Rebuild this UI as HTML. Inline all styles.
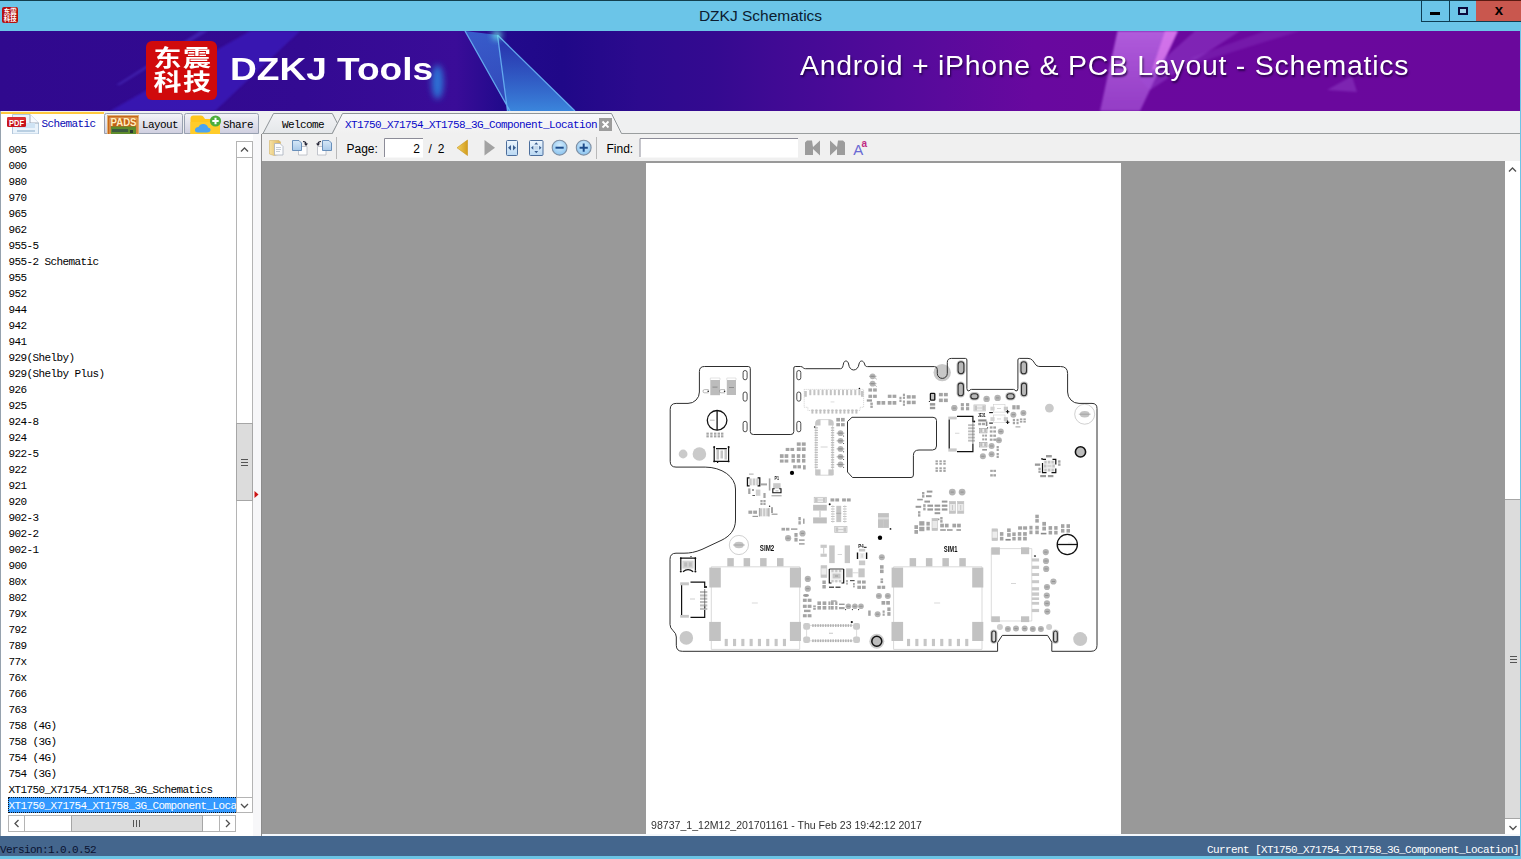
<!DOCTYPE html>
<html lang="en">
<head>
<meta charset="utf-8">
<title>DZKJ Schematics</title>
<style>
*{box-sizing:border-box;margin:0;padding:0}
html,body{width:1521px;height:859px;overflow:hidden;background:#6bc5e8}
body{position:relative;font-family:"Liberation Sans","Noto Sans CJK SC",sans-serif;font-size:13px;color:#000}
.abs{position:absolute}
.mono{font-family:"Liberation Mono","Noto Sans CJK SC",monospace;font-size:11px;letter-spacing:-0.6px;white-space:pre}
/* title bar */
#titlebar{left:0;top:0;width:1521px;height:31px;background:#6bc5e8;border-top:1px solid #123f4e}
#title{left:0;top:6.500px;width:1521px;text-align:center;font-size:15.500px;line-height:18px;color:#0c1c30}
#appicon{left:2px;top:7px;width:16px;height:16px;background:#b5100f;border-radius:2px;overflow:hidden}
#winbtns{left:1421px;top:0;width:100px;height:22px;border-left:1px solid #0d3c52;border-bottom:1px solid #0d3c52}
#btnmin{left:0;top:0;width:27px;height:21px}
#btnmax{left:27px;top:0;width:27px;height:21px;border-left:1px solid #0d3c52}
#btnclose{left:54px;top:0;width:46px;height:21px;background:#c9574e;border-top:1px solid #5a1a12}
/* banner */
#banner{left:0;top:31px;width:1520px;height:80px;overflow:hidden;background:linear-gradient(90deg,#30098e 0%,#2c0a8c 22%,#28088a 45%,#3f0a92 60%,#6a0a9c 75%,#6c089c 100%)}
#logo{left:146px;top:9.5px;width:71px;height:59px;background:#d00a0c;border-radius:6px}
#logo span{position:absolute;color:#fff;font-family:"Liberation Sans","Noto Sans CJK SC",sans-serif;font-weight:700;font-size:28px;line-height:28px;letter-spacing:1.5px;transform:scale(1,.8);transform-origin:0 0;white-space:nowrap}
#brand{left:229.500px;top:18px;font-size:32px;line-height:40px;font-weight:700;color:#fff;white-space:nowrap;transform:scale(1.158,1);transform-origin:0 0}
#slogan{left:800px;top:19px;font-size:27px;line-height:32px;color:#fff;white-space:nowrap;text-shadow:1px 2px 2px rgba(30,0,60,.8);letter-spacing:.7px;transform:scale(1.054,1);transform-origin:0 0}
/* tab strip */
#tabstrip{left:0;top:111px;width:1520px;height:23px;background:#eff0f1}
#tabline{left:262px;top:133px;width:1258px;height:1px;background:#9a9e9f}
.ltab{top:2px;height:20px;border:1px solid #9aa0b4;border-bottom:none;border-radius:3px 3px 0 0;background:linear-gradient(#f2f2f6,#d4d4e2)}
#tab1{left:1px;top:1px;width:103px;height:22px;background:#fff;border-top:2px solid #ffc83d}
/* left panel */
#left{left:0;top:134px;width:262px;height:702px;background:#fff;border-left:1px solid #96a2ae}
#splitter{left:253px;top:134px;width:8px;height:702px;background:#f7f7f9}
#lborder{left:261px;top:134px;width:1px;height:702px;background:#8c8c8c}
.row.sel{background:#3399ff;color:#fff;outline:1px dotted #111;outline-offset:-1px}
.row{position:absolute;left:8px;width:300px;height:16px;line-height:18px;padding-left:.5px;color:#000;overflow:hidden}
/* toolbar + viewer */
#toolbar{left:262px;top:134px;width:1258px;height:27px;background:#f0f0f0}
#viewer{left:262px;top:161px;width:1243px;height:673px;background:#999}
#page{left:384px;top:2px;width:475px;height:671px;background:#fff}
#vsb{left:1505px;top:161px;width:15px;height:673px;background:#fff}
#under{left:262px;top:834px;width:1258px;height:2px;background:#f4f8fc}
/* status */
#status{left:0;top:836px;width:1520px;height:20px;background:#44668d}
#bottom{left:0;top:856px;width:1521px;height:3px;background:#6cc4e4}
</style>
</head>
<body>
<!-- TITLE BAR -->
<div id="titlebar" class="abs"></div>
<div id="appicon" class="abs"><svg width="16" height="16" viewBox="0 0 16 16"><text x="1.800" y="7.400" font-family="Liberation Sans, Noto Sans CJK SC, sans-serif" font-weight="700" font-size="6.400" fill="#fff">东震</text><text x="1.800" y="13.800" font-family="Liberation Sans, Noto Sans CJK SC, sans-serif" font-weight="700" font-size="6.400" fill="#fff">科技</text></svg></div>
<div id="title" class="abs">DZKJ Schematics</div>
<div id="winbtns" class="abs">
  <div id="btnmin" class="abs"><div class="abs" style="left:8px;top:12px;width:10px;height:3px;background:#000"></div></div>
  <div id="btnmax" class="abs"><div class="abs" style="left:8px;top:7px;width:10px;height:8px;border:2px solid #0a0a3c;background:#9ed4ea"></div></div>
  <div id="btnclose" class="abs"><div class="abs" style="left:0;top:0;width:46px;text-align:center;font-weight:700;font-size:15px;line-height:18px;color:#000">x</div></div>
</div>
<!-- BANNER -->
<div id="banner" class="abs">
  <svg class="abs" style="left:0;top:0" width="1520" height="80" viewBox="0 31 1520 80">
    <defs>
      <linearGradient id="bg1" x1="0" y1="0" x2="1520" y2="0" gradientUnits="userSpaceOnUse">
        <stop offset="0" stop-color="#30098e"/><stop offset=".2" stop-color="#330a92"/><stop offset=".3" stop-color="#3a0c98"/>
        <stop offset=".33" stop-color="#220a8c"/><stop offset=".37" stop-color="#200888"/><stop offset=".42" stop-color="#2c0a8e"/>
        <stop offset=".47" stop-color="#340a90"/><stop offset=".51" stop-color="#400a94"/><stop offset=".56" stop-color="#4c0a98"/>
        <stop offset=".62" stop-color="#5a0a9c"/><stop offset=".68" stop-color="#68089f"/><stop offset=".74" stop-color="#6a089e"/><stop offset="1" stop-color="#6a089c"/>
      </linearGradient>
      <linearGradient id="sh1" x1="0" y1="31" x2="0" y2="111" gradientUnits="userSpaceOnUse"><stop offset="0" stop-color="#2a48c0" stop-opacity=".55"/><stop offset="1" stop-color="#3c8ce0" stop-opacity=".95"/></linearGradient>
      <linearGradient id="sh2" x1="0" y1="31" x2="0" y2="111" gradientUnits="userSpaceOnUse"><stop offset="0" stop-color="#3a70d8" stop-opacity=".8"/><stop offset="1" stop-color="#3a60cc" stop-opacity=".7"/></linearGradient>
      <linearGradient id="pk1" x1="0" y1="31" x2="0" y2="111" gradientUnits="userSpaceOnUse"><stop offset="0" stop-color="#c878f0" stop-opacity=".75"/><stop offset="1" stop-color="#b060e0" stop-opacity=".6"/></linearGradient>
      <filter id="bl3" x="-50%" y="-50%" width="200%" height="200%"><feGaussianBlur stdDeviation="3"/></filter>
      <filter id="bl1" x="-20%" y="-20%" width="140%" height="140%"><feGaussianBlur stdDeviation=".8"/></filter>
      <filter id="bl6" x="-50%" y="-50%" width="200%" height="200%"><feGaussianBlur stdDeviation="5"/></filter>
    </defs>
    <rect x="0" y="31" width="1520" height="80" fill="url(#bg1)"/>
    <!-- faint diagonal band on left -->
    <polygon points="250,31 300,31 215,111 110,111" fill="#4028d8" opacity=".45" filter="url(#bl1)"/>
    <polygon points="200,31 208,31 120,85 116,85" fill="#5a48e0" opacity=".35" filter="url(#bl1)"/>
    <!-- blue glow -->
    <ellipse cx="437.500" cy="82" rx="6" ry="17" fill="#2c84e0" opacity=".85" filter="url(#bl3)"/>
    <!-- crystal shard -->
    <polygon points="465,31 497.500,35 507.500,111 510,111" fill="url(#sh2)"/>
    <polygon points="497.500,35 575,111 507.500,111" fill="url(#sh1)"/>
    <path d="M465 31 L510 111 M497.500 35 L507.500 111 M497.500 35 L575 111" stroke="#68b4f4" stroke-width="1.300" fill="none" opacity=".9"/>
    <circle cx="497" cy="35" r="5" fill="#70f0e8" opacity=".8" filter="url(#bl3)"/>
    <!-- pink shards -->
    <polygon points="1117.500,31 1177.500,31 1140,111 1100,111" fill="url(#pk1)" filter="url(#bl1)"/>
    <polygon points="1165,31 1178,31 1160,70 1152,70" fill="#f088f8" opacity=".55" filter="url(#bl1)"/>
    <polygon points="1195,31 1240,31 1150,90 1140,80" fill="#a050d8" opacity=".4" filter="url(#bl1)"/>
    <polygon points="1265,31 1300,31 1200,62 1190,58" fill="#9040c8" opacity=".3" filter="url(#bl1)"/>
    <polygon points="1327,90 1352,76 1357,92" fill="#9a50d0" opacity=".4" filter="url(#bl1)"/>
  </svg>
  <div id="logo" class="abs"><span style="left:7.500px;top:7.500px">东震</span><span style="left:7.500px;top:31px">科技</span></div>
  <div id="brand" class="abs">DZKJ Tools</div>
  <div id="slogan" class="abs">Android + iPhone &amp; PCB Layout - Schematics</div>
</div>
<!-- TAB STRIP -->
<div id="tabstrip" class="abs"></div>
<div id="tabline" class="abs"></div>
<div class="abs" style="left:0;top:111px;width:1px;height:725px;background:#96a2ae"></div>
<svg class="abs" style="left:0;top:111px" width="1520" height="24" viewBox="0 111 1520 24">
  <defs>
    <linearGradient id="gtab" x1="0" y1="0" x2="0" y2="1"><stop offset="0" stop-color="#f4f4f8"/><stop offset="1" stop-color="#cfcfe0"/></linearGradient>
    <linearGradient id="gdoc" x1="0" y1="0" x2="0" y2="1"><stop offset="0" stop-color="#f2f3f5"/><stop offset="1" stop-color="#e4e7ea"/></linearGradient>
    <linearGradient id="gdoca" x1="0" y1="0" x2="0" y2="1"><stop offset="0" stop-color="#f8f8fc"/><stop offset="1" stop-color="#f0f0f0"/></linearGradient>
  </defs>
  <!-- active left tab -->
  <rect x="1" y="112" width="103" height="23" fill="#fff"/>
  <rect x="1" y="112" width="103" height="2" fill="#ffc83d"/>
  <!-- Layout / Share tabs -->
  <path d="M104.5 133.5 V115.5 Q104.5 113.5 106.5 113.5 H180.5 Q182.5 113.5 182.5 115.5 V133.5 Z" fill="url(#gtab)" stroke="#98a0b0"/>
  <path d="M184.5 133.5 V115.5 Q184.5 113.5 186.5 113.5 H256.5 Q258.5 113.5 258.5 115.5 V133.5 Z" fill="url(#gtab)" stroke="#98a0b0"/>
  <!-- Welcome doc tab -->
  <path d="M263 133.5 L273.5 113.5 H332.3 L337.5 123.5 L332.3 133.5 Z" fill="url(#gdoc)" stroke="#8f9599"/>
  <!-- active doc tab -->
  <path d="M332.3 134 L342.5 113.5 H611.5 L621.5 133.5 H1520 V135 H332 Z" fill="#f0f0f0" stroke="none"/>
  <path d="M332.3 133.5 L342.5 113.5 H611.5 L621.5 133.5" fill="url(#gdoca)" stroke="#8f9599"/>
  <path d="M621.5 133.5 H1520" stroke="#9a9e9f" fill="none"/>
  <path d="M262 133.5 H332.3" stroke="#9a9e9f" fill="none"/>
  <!-- close button -->
  <rect x="599" y="118" width="13" height="13" fill="#9c9c9c"/>
  <path d="M602.5 121.5 L608.5 127.5 M608.5 121.5 L602.5 127.5" stroke="#fff" stroke-width="1.8"/>
  <!-- PDF icon -->
  <g>
    <path d="M12.5 114.5 H30 L38.5 123 V134 H12.5 Z" fill="#eaf3fb" stroke="#b4c8dc"/>
    <path d="M30 114.5 V123 H38.5" fill="#f8fbff" stroke="#8d9aa8" stroke-width=".8"/>
    <rect x="17" y="123" width="18" height="5" fill="#cfe3f4"/>
    <rect x="17" y="130" width="18" height="2" fill="#b9cfe2"/>
    <rect x="7" y="117" width="19" height="10" rx="1.5" fill="#c8141c"/>
    <rect x="7" y="117" width="19" height="4" rx="1.5" fill="#e0363c" opacity=".7"/>
    <text x="16.5" y="125.6" text-anchor="middle" font-family="Liberation Sans, sans-serif" font-weight="700" font-size="8.5" fill="#fff" textLength="15" lengthAdjust="spacingAndGlyphs">PDF</text>
  </g>
  <!-- PADS icon -->
  <g>
    <rect x="107.5" y="115.5" width="31" height="19" fill="#c7661c" stroke="#e0b070"/>
    <rect x="110" y="118" width="27" height="16" fill="#c25e14" stroke="#f0d090" stroke-width=".7"/>
    <rect x="111" y="126.500" width="25" height="8" fill="#5e8c2c"/>
    <rect x="112" y="129" width="16" height="3" fill="#3c5a40"/>
    <rect x="130" y="130" width="3" height="3" fill="#2c3c30"/>
    <text x="123.500" y="125.800" text-anchor="middle" font-family="Liberation Sans, sans-serif" font-weight="700" font-size="11.500" fill="#ffeec0" textLength="26" lengthAdjust="spacingAndGlyphs">PADS</text>
  </g>
  <!-- Share icon -->
  <g>
    <path d="M190.500 134 V118.500 Q190.500 115.500 193.500 115.500 H201 Q203 115.500 204 117.500 L205 119 H217 Q220 119 220 122 V134 Z" fill="#ffc61c"/>
    <path d="M190.500 134 V122 H220 V134 Z" fill="#ffcc2a"/>
    <path d="M198 132.500 Q194.500 132.500 195 129.500 Q195.500 127 198.500 127 Q200 123.500 204 124 Q207.500 124.500 208 127.500 Q211 128 210.500 130.500 Q210 132.500 207 132.500 Z" fill="#4aa4f2"/>
    <circle cx="215.500" cy="121" r="5.600" fill="#4cae3c"/>
    <path d="M215.500 117.800 V124.200 M212.300 121 H218.700" stroke="#fff" stroke-width="2"/>
  </g>
</svg>
<div class="abs mono" style="left:41.500px;top:116px;line-height:16px;color:#0808b4">Schematic</div>
<div class="abs mono" style="left:142px;top:117px;line-height:16px;color:#000">Layout</div>
<div class="abs mono" style="left:223px;top:117px;line-height:16px;color:#000">Share</div>
<div class="abs mono" style="left:282px;top:117px;line-height:16px;color:#000">Welcome</div>
<div class="abs mono" style="left:345px;top:117px;line-height:16px;color:#0808c8">XT1750_X71754_XT1758_3G_Component_Location</div>

<!-- LEFT PANEL -->
<div id="left" class="abs"></div>
<div id="splitter" class="abs"></div>
<div id="lborder" class="abs"></div>
<div id="list" class="abs mono" style="left:0;top:141px;width:236px;height:672px;overflow:hidden">
<div class="row" style="top:0px">005</div>
<div class="row" style="top:16px">000</div>
<div class="row" style="top:32px">980</div>
<div class="row" style="top:48px">970</div>
<div class="row" style="top:64px">965</div>
<div class="row" style="top:80px">962</div>
<div class="row" style="top:96px">955-5</div>
<div class="row" style="top:112px">955-2 Schematic</div>
<div class="row" style="top:128px">955</div>
<div class="row" style="top:144px">952</div>
<div class="row" style="top:160px">944</div>
<div class="row" style="top:176px">942</div>
<div class="row" style="top:192px">941</div>
<div class="row" style="top:208px">929(Shelby)</div>
<div class="row" style="top:224px">929(Shelby Plus)</div>
<div class="row" style="top:240px">926</div>
<div class="row" style="top:256px">925</div>
<div class="row" style="top:272px">924-8</div>
<div class="row" style="top:288px">924</div>
<div class="row" style="top:304px">922-5</div>
<div class="row" style="top:320px">922</div>
<div class="row" style="top:336px">921</div>
<div class="row" style="top:352px">920</div>
<div class="row" style="top:368px">902-3</div>
<div class="row" style="top:384px">902-2</div>
<div class="row" style="top:400px">902-1</div>
<div class="row" style="top:416px">900</div>
<div class="row" style="top:432px">80x</div>
<div class="row" style="top:448px">802</div>
<div class="row" style="top:464px">79x</div>
<div class="row" style="top:480px">792</div>
<div class="row" style="top:496px">789</div>
<div class="row" style="top:512px">77x</div>
<div class="row" style="top:528px">76x</div>
<div class="row" style="top:544px">766</div>
<div class="row" style="top:560px">763</div>
<div class="row" style="top:576px">758 (4G)</div>
<div class="row" style="top:592px">758 (3G)</div>
<div class="row" style="top:608px">754 (4G)</div>
<div class="row" style="top:624px">754 (3G)</div>
<div class="row" style="top:640px">XT1750_X71754_XT1758_3G_Schematics</div>
<div class="row sel" style="top:656px">XT1750_X71754_XT1758_3G_Component_Location</div>
</div>
<!-- left vertical scrollbar -->
<div class="abs" style="left:236px;top:141px;width:17px;height:672px;background:#fff;border:1px solid #b4b4b4"></div>
<div class="abs" style="left:236px;top:157px;width:17px;height:1px;background:#b4b4b4"></div>
<div class="abs" style="left:236px;top:797px;width:17px;height:1px;background:#b4b4b4"></div>
<svg class="abs" style="left:236px;top:141px" width="17" height="17" viewBox="0 0 17 17"><path d="M5 10.5 L8.5 7 L12 10.5" fill="none" stroke="#505050" stroke-width="1.3"/></svg>
<svg class="abs" style="left:236px;top:797px" width="17" height="17" viewBox="0 0 17 17"><path d="M5 7 L8.5 10.5 L12 7" fill="none" stroke="#505050" stroke-width="1.3"/></svg>
<div class="abs" style="left:236px;top:423px;width:17px;height:78px;background:#dcdcdc;border:1px solid #a6a6a6"></div>
<div class="abs" style="left:241px;top:459px;width:7px;height:1px;background:#555;box-shadow:0 3px 0 #555,0 6px 0 #555"></div>
<!-- splitter arrow -->
<svg class="abs" style="left:253px;top:490px" width="8" height="9" viewBox="0 0 8 9"><path d="M1.5 1 L5.5 4.5 L1.5 8 Z" fill="#cc1414"/></svg>
<!-- left horizontal scrollbar -->
<div class="abs" style="left:8px;top:815px;width:228px;height:17px;background:#fff;border:1px solid #b4b4b4"></div>
<div class="abs" style="left:24px;top:815px;width:1px;height:17px;background:#b4b4b4"></div>
<div class="abs" style="left:219px;top:815px;width:1px;height:17px;background:#b4b4b4"></div>
<svg class="abs" style="left:8px;top:815px" width="17" height="17" viewBox="0 0 17 17"><path d="M10.5 5 L7 8.5 L10.5 12" fill="none" stroke="#505050" stroke-width="1.3"/></svg>
<svg class="abs" style="left:219px;top:815px" width="17" height="17" viewBox="0 0 17 17"><path d="M7 5 L10.5 8.5 L7 12" fill="none" stroke="#505050" stroke-width="1.3"/></svg>
<div class="abs" style="left:71px;top:815px;width:132px;height:17px;background:#dcdcdc;border:1px solid #a6a6a6"></div>
<div class="abs" style="left:133px;top:820px;width:1px;height:7px;background:#555;box-shadow:3px 0 0 #555,6px 0 0 #555"></div>

<!-- TOOLBAR -->
<div id="toolbar" class="abs"></div>
<svg class="abs" style="left:262px;top:134px" width="1258" height="27" viewBox="262 134 1258 27">
  <defs>
    <linearGradient id="gfold" x1="0" y1="0" x2="1" y2="0"><stop offset="0" stop-color="#f6e2a4"/><stop offset="1" stop-color="#dcb45c"/></linearGradient>
    <linearGradient id="gblue" x1="0" y1="0" x2="0" y2="1"><stop offset="0" stop-color="#eef6fd"/><stop offset="1" stop-color="#b9d8f3"/></linearGradient>
    <linearGradient id="gbpage" x1="0" y1="0" x2="0" y2="1"><stop offset="0" stop-color="#d6e8f8"/><stop offset="1" stop-color="#a9c9e8"/></linearGradient>
    <linearGradient id="ggold" x1="0" y1="0" x2="1" y2="0"><stop offset="0" stop-color="#f2d060"/><stop offset="1" stop-color="#d29c1c"/></linearGradient>
    <radialGradient id="gcirc" cx=".5" cy=".35" r=".7"><stop offset="0" stop-color="#d4ecfc"/><stop offset="1" stop-color="#84c0ee"/></radialGradient>
  </defs>
  <!-- icon 1: folder + doc -->
  <path d="M269.500 140.500 H279 L280.500 142 V154 L274 155.500 L269.500 154 Z" fill="url(#gfold)" stroke="#d4b468" stroke-width=".6"/>
  <path d="M274.500 143.500 H280 L283 146.500 V155 H274.500 Z" fill="#fbfcfe" stroke="#a8b0bc" stroke-width=".8"/>
  <path d="M276 147.500 H281 M276 149.500 H281 M276 151.500 H280" stroke="#b8c0cc" stroke-width=".8"/>
  <!-- icon 2 -->
  <path d="M299.500 146.500 H307 V155 H298.500 V151" fill="#fdfdfe" stroke="#b4b8c0" stroke-width=".8"/>
  <path d="M292.500 140.500 H299 L301.500 143 V150.500 H292.500 Z" fill="url(#gbpage)" stroke="#5c86b4" stroke-width=".9"/>
  <path d="M303 141.500 Q306 141.500 306 144" fill="none" stroke="#223" stroke-width="1.2"/>
  <path d="M304 143.500 H308 L306 146 Z" fill="#223"/>
  <!-- icon 3 -->
  <path d="M324.500 146.500 H317.500 V155 H326 V151" fill="#fdfdfe" stroke="#b4b8c0" stroke-width=".8"/>
  <path d="M322.500 140.500 H329 L331.500 143 V150.500 H322.500 Z" fill="url(#gbpage)" stroke="#5c86b4" stroke-width=".9"/>
  <path d="M321 141.500 Q318 141.500 318 144" fill="none" stroke="#223" stroke-width="1.2"/>
  <path d="M316 143.500 H320 L318 146 Z" fill="#223"/>
  <!-- separator -->
  <path d="M336.500 137 V159" stroke="#b9b9b9"/>
  <!-- page box -->
  <rect x="384" y="138" width="39" height="19.500" fill="#fff"/>
  <path d="M384.500 157 V138.500 H423" fill="none" stroke="#8c8c98"/>
  <!-- prev (gold) / next (gray) -->
  <path d="M467.500 140 V155.500 L457 147.750 Z" fill="url(#ggold)" stroke="#c8961c" stroke-width=".6"/>
  <path d="M484.500 140 V155.500 L495 147.750 Z" fill="#a2a2a2"/>
  <!-- fit width -->
  <rect x="506.500" y="140.500" width="11" height="15" rx="1" fill="url(#gblue)" stroke="#4c6e9c"/>
  <path d="M508 147.750 L511 145 V150.500 Z M516 147.750 L513 145 V150.500 Z" fill="#3a5e90"/>
  <!-- fit page -->
  <rect x="529.500" y="140.500" width="13.500" height="15" rx="1" fill="url(#gblue)" stroke="#4c6e9c"/>
  <path d="M531 147.750 L533.300 145.800 V149.700 Z M541.500 147.750 L539.200 145.800 V149.700 Z M536.250 142.300 L538.200 144.600 H534.300 Z M536.250 153.200 L538.200 150.900 H534.300 Z" fill="#3a5e90"/>
  <rect x="534.500" y="146" width="3.500" height="3.500" fill="#c6d8ea"/>
  <!-- zoom out / in -->
  <circle cx="559.600" cy="147.700" r="7.400" fill="url(#gcirc)" stroke="#7f90a4" stroke-width="1.100"/>
  <path d="M555.500 147.700 H563.700" stroke="#1c4c8c" stroke-width="2"/>
  <circle cx="583.700" cy="147.700" r="7.400" fill="url(#gcirc)" stroke="#7f90a4" stroke-width="1.100"/>
  <path d="M579.600 147.700 H587.800 M583.700 143.600 V151.800" stroke="#1c4c8c" stroke-width="2"/>
  <!-- separator -->
  <path d="M596.500 137 V159" stroke="#b9b9b9"/>
  <!-- find box -->
  <rect x="639.500" y="138" width="158.500" height="19.500" fill="#fff"/>
  <path d="M640 157 V138.500 H798" fill="none" stroke="#8c8c98"/>
  <!-- find prev/next -->
  <path d="M805 142.500 L807 140.500 H812 L813 147 L820 140.500 V155.500 L813 149 V155 H805 Z" fill="#9c9c9c"/>
  <path d="M845 142.500 L843 140.500 H838 L837 147 L830 140.500 V155.500 L837 149 V155 H845 Z" fill="#9c9c9c"/>
  <!-- Aa -->
  <text x="853.300" y="155" font-family="Liberation Sans, sans-serif" font-size="15" fill="#6a6ad4">A</text>
  <text x="861.500" y="147" font-family="Liberation Sans, sans-serif" font-size="10" font-weight="700" fill="#c02c84">a</text>
</svg>
<div class="abs" style="left:346.500px;top:141px;font-size:12px;line-height:16px">Page:</div>
<div class="abs" style="left:413.300px;top:141px;font-size:12px;line-height:16px">2</div>
<div class="abs" style="left:428.500px;top:141px;font-size:12px;line-height:16px;word-spacing:2.500px">/ 2</div>
<div class="abs" style="left:606.500px;top:141px;font-size:12px;line-height:16px">Find:</div>

<!-- VIEWER -->
<div id="viewer" class="abs">
  <div id="page" class="abs">
<!--PCB-START-->
<svg class="abs" style="left:0;top:0;filter:blur(.35px)" width="475" height="671" viewBox="646 163 475 671">
<circle cx="942.2" cy="372.6" r="8.7" fill="#c8c8c8"/>
<circle cx="683.1" cy="454" r="4.4" fill="#cacaca"/>
<circle cx="699.4" cy="454" r="6.8" fill="#cacaca"/>
<circle cx="686.3" cy="637.9" r="6.8" fill="#c8c8c8"/>
<circle cx="1080.2" cy="639.1" r="7" fill="#c8c8c8"/>
<circle cx="1049.4" cy="408.1" r="4.4" fill="#cacaca"/>
<rect x="743.1" y="370.5" width="4" height="9.3" rx="2" fill="none" stroke="#2e2e2e" stroke-width="0.85"/>
<rect x="743.1" y="392" width="4" height="9.2" rx="2" fill="none" stroke="#2e2e2e" stroke-width="0.85"/>
<rect x="743.1" y="421.3" width="4" height="10.5" rx="2" fill="none" stroke="#2e2e2e" stroke-width="0.85"/>
<rect x="796.8" y="370.5" width="4" height="9.3" rx="2" fill="none" stroke="#2e2e2e" stroke-width="0.85"/>
<rect x="796.8" y="392" width="4" height="9.2" rx="2" fill="none" stroke="#2e2e2e" stroke-width="0.85"/>
<rect x="796.8" y="421.3" width="4" height="10.5" rx="2" fill="none" stroke="#2e2e2e" stroke-width="0.85"/>
<rect x="710.3" y="380" width="9.7" height="15.2" fill="#bcbcbc"/>
<rect x="726.8" y="380" width="9.2" height="15" fill="#bcbcbc"/>
<path d="M710.3 380V378H720V380 M726.8 380V378H736V380" fill="none" stroke="#d0d0d0" stroke-width=".6"/>
<rect x="712.5" y="386.6" width="5" height="1" fill="#8e8e8e"/>
<rect x="729" y="387" width="5" height="1" fill="#8e8e8e"/>
<path d="M708.6 389.6H704.5Q703 389.6 703 391.2Q703 392.8 704.5 392.8H708.6 M725 389.6H721Q719.5 389.6 719.5 391.2Q719.5 392.8 721 392.8H725" fill="none" stroke="#8a8a8a" stroke-width=".6"/>
<circle cx="708.2" cy="391.2" r="0.8" fill="#111"/>
<circle cx="724.6" cy="391.2" r="0.8" fill="#111"/>
<circle cx="717.1" cy="420.3" r="9.8" fill="#fff" stroke="#111" stroke-width="1.3"/>
<path d="M717.1 410.5V430.1" stroke="#111" stroke-width="1.3"/>
<rect x="709.8" y="419.7" width="4.8" height="1" fill="#bbb"/>
<rect x="706.4" y="432.6" width="2.4" height="2.1" fill="#a4a4a4"/>
<rect x="706.4" y="435.3" width="2.4" height="2.1" fill="#a4a4a4"/>
<rect x="710.2" y="432.6" width="2.4" height="2.1" fill="#a4a4a4"/>
<rect x="710.2" y="435.3" width="2.4" height="2.1" fill="#a4a4a4"/>
<rect x="714" y="432.6" width="2.4" height="2.1" fill="#a4a4a4"/>
<rect x="714" y="435.3" width="2.4" height="2.1" fill="#a4a4a4"/>
<rect x="717.6" y="432.6" width="2.4" height="2.1" fill="#a4a4a4"/>
<rect x="717.6" y="435.3" width="2.4" height="2.1" fill="#a4a4a4"/>
<rect x="721" y="432.6" width="2.4" height="2.1" fill="#a4a4a4"/>
<rect x="721" y="435.3" width="2.4" height="2.1" fill="#a4a4a4"/>
<rect x="716.5" y="449.5" width="2.5" height="10" fill="#c4c4c4"/>
<rect x="720.5" y="450.5" width="2.5" height="8" fill="#c4c4c4"/>
<rect x="724.5" y="449.5" width="2.5" height="10" fill="#c4c4c4"/>
<path d="M714.2 447V461.4H728.6V447 M716 448.6H726.8" fill="none" stroke="#111" stroke-width="1.2"/>
<circle cx="714.2" cy="447" r="1" fill="#111"/>
<circle cx="728.6" cy="447" r="1" fill="#111"/>
<circle cx="714.2" cy="461.4" r="0.9" fill="#111"/>
<circle cx="728.6" cy="461.4" r="0.9" fill="#111"/>
<circle cx="717.6" cy="462.4" r="0.7" fill="#111"/>
<rect x="796.8" y="442.4" width="3.9" height="3.4" fill="#a4a4a4"/>
<rect x="801.8" y="442.4" width="3.9" height="3.4" fill="#a4a4a4"/>
<rect x="785.7" y="447.9" width="3.7" height="3.1" fill="#a4a4a4"/>
<rect x="790.4" y="447.9" width="3.7" height="3.1" fill="#a4a4a4"/>
<rect x="796.8" y="447.4" width="3.9" height="3.6" fill="#a4a4a4"/>
<rect x="801.8" y="447.4" width="3.9" height="3.6" fill="#a4a4a4"/>
<rect x="779.9" y="454.2" width="3.7" height="3.7" fill="#a4a4a4"/>
<rect x="784.6" y="454.2" width="3.7" height="3.7" fill="#a4a4a4"/>
<rect x="779.9" y="459.5" width="3.7" height="3.1" fill="#a4a4a4"/>
<rect x="784.6" y="459.5" width="3.7" height="3.1" fill="#a4a4a4"/>
<rect x="791.5" y="454.2" width="3.4" height="3.7" fill="#a4a4a4"/>
<rect x="791.5" y="458.9" width="3.4" height="3.7" fill="#a4a4a4"/>
<rect x="796.8" y="454.2" width="3.4" height="3.7" fill="#a4a4a4"/>
<rect x="796.8" y="458.9" width="3.4" height="3.7" fill="#a4a4a4"/>
<rect x="802" y="454.2" width="3.4" height="3.7" fill="#a4a4a4"/>
<rect x="802" y="458.9" width="3.4" height="3.7" fill="#a4a4a4"/>
<rect x="793.1" y="465.2" width="3.5" height="3.2" fill="#a4a4a4"/>
<rect x="797.5" y="465.2" width="3.5" height="3.2" fill="#a4a4a4"/>
<rect x="803" y="465.2" width="2.7" height="4.3" fill="#a4a4a4"/>
<circle cx="792" cy="472.9" r="2.1" fill="#000"/>
<rect x="747.8" y="478.4" width="11.8" height="7" fill="#ececec"/>
<rect x="749.6" y="478.6" width="2" height="6.6" fill="#c9c9c9"/>
<rect x="753" y="478.6" width="2" height="6.6" fill="#c9c9c9"/>
<rect x="756.4" y="478.6" width="2" height="6.6" fill="#c9c9c9"/>
<path d="M749.6 477.9H747.4V485.8H749.6 M757.6 477.9H759.8V485.8H757.6" fill="none" stroke="#111" stroke-width="1.2"/>
<rect x="749" y="473.6" width="4.6" height="1" fill="#aaa"/>
<rect x="760.6" y="483.4" width="6.4" height="2" fill="#a4a4a4"/>
<rect x="768.8" y="478.4" width="1.6" height="12.1" fill="#a4a4a4"/>
<rect x="748.2" y="488.4" width="2.2" height="5.6" fill="#a4a4a4"/>
<rect x="755.8" y="489.6" width="4.6" height="6.2" fill="#cfcfcf"/>
<circle cx="753" cy="490" r="0.8" fill="#222"/>
<rect x="752.4" y="495" width="2.6" height="1" fill="#555"/>
<rect x="773.2" y="483.2" width="7.4" height="5.4" fill="#c9c9c9"/>
<path d="M774.6 488.8H772.8V492.8H781V488.8H779.2" fill="none" stroke="#111" stroke-width="1.1"/>
<rect x="775.5" y="490" width="3" height="1.6" fill="#cfcfcf"/>
<rect x="771.5" y="495" width="10.1" height="1.4" fill="#b5b5b5"/>
<rect x="763.4" y="493" width="2.2" height="5" fill="#a4a4a4"/>
<rect x="760.4" y="500" width="2.2" height="2.2" fill="#a4a4a4"/>
<rect x="760.4" y="502.8" width="2.2" height="2.2" fill="#a4a4a4"/>
<rect x="763.4" y="500" width="2.2" height="2.2" fill="#a4a4a4"/>
<rect x="763.4" y="502.8" width="2.2" height="2.2" fill="#a4a4a4"/>
<rect x="748.4" y="510.6" width="3.8" height="3.2" fill="#a4a4a4"/>
<rect x="753.2" y="510.6" width="3.8" height="3.2" fill="#a4a4a4"/>
<rect x="752.5" y="515.8" width="5.5" height="1.2" fill="#999"/>
<rect x="759.4" y="508" width="9.6" height="8.5" fill="#ededed"/>
<rect x="760" y="508.4" width="2" height="7.8" fill="#c9c9c9"/>
<rect x="763.2" y="508.4" width="2" height="7.8" fill="#c9c9c9"/>
<rect x="766.4" y="508.4" width="2" height="7.8" fill="#c9c9c9"/>
<path d="M759.4 508V516.5 M769 508V516.5" stroke="#777" stroke-width=".7"/>
<rect x="771" y="507.2" width="2" height="5.8" fill="#a4a4a4"/>
<rect x="771.6" y="513.6" width="5.9" height="1.2" fill="#999"/>
<circle cx="769.6" cy="506.2" r="0.7" fill="#222"/>
<rect x="798.4" y="517" width="2.4" height="3.3" fill="#a4a4a4"/>
<rect x="798.4" y="521.2" width="2.4" height="3.3" fill="#a4a4a4"/>
<rect x="803" y="518.6" width="1.6" height="5.2" fill="#a4a4a4"/>
<rect x="781.5" y="527.8" width="3.5" height="2.8" fill="#a4a4a4"/>
<rect x="785.9" y="527.8" width="3.5" height="2.8" fill="#a4a4a4"/>
<rect x="791" y="528.4" width="6.4" height="1.4" fill="#999"/>
<circle cx="802.5" cy="533.4" r="3.1" fill="#b4b4b4"/>
<path d="M800.9 533.4H804.1" stroke="#8a8a8a" stroke-width=".8"/>
<circle cx="788.1" cy="538.2" r="3.1" fill="#b4b4b4"/>
<path d="M786.5 538.2H789.7" stroke="#8a8a8a" stroke-width=".8"/>
<rect x="794.4" y="533" width="3.2" height="3.8" fill="#a4a4a4"/>
<rect x="794.4" y="537.8" width="3.2" height="3.8" fill="#a4a4a4"/>
<rect x="799" y="539.4" width="5.6" height="1.4" fill="#999"/>
<rect x="799" y="543.2" width="5.6" height="1.4" fill="#999"/>
<circle cx="738.9" cy="545" r="9.6" fill="none" stroke="#b0b0b0" stroke-width=".6"/>
<ellipse cx="738.9" cy="545" rx="4.8" ry="3.2" fill="#c4c4c4"/>
<path d="M733 545H744.8" stroke="#9a9a9a" stroke-width=".7"/>
<path d="M711.3 566.8H799.6999999999999V649.4H711.3Z" fill="none" stroke="#cfcfcf" stroke-width=".8"/>
<rect x="727.3" y="558.1" width="6.5" height="8.2" fill="#c2c2c2"/>
<rect x="743.6" y="558.1" width="6.5" height="8.2" fill="#c2c2c2"/>
<rect x="760.1" y="558.1" width="6.5" height="8.2" fill="#c2c2c2"/>
<rect x="777" y="558.1" width="6.5" height="8.2" fill="#c2c2c2"/>
<rect x="709.3" y="567.6" width="11.5" height="19.9" fill="#c2c2c2"/>
<rect x="789.9" y="567.6" width="11.1" height="19.9" fill="#c2c2c2"/>
<rect x="709.2" y="621.9" width="11.6" height="19.1" fill="#c2c2c2"/>
<rect x="789.9" y="621.9" width="11.1" height="19.1" fill="#c2c2c2"/>
<rect x="724.7" y="638.9" width="3.1" height="7.2" fill="#c6c6c6"/>
<rect x="733" y="638.9" width="3.1" height="7.2" fill="#c6c6c6"/>
<rect x="741.3" y="638.9" width="3.1" height="7.2" fill="#c6c6c6"/>
<rect x="749.6" y="638.9" width="3.1" height="7.2" fill="#c6c6c6"/>
<rect x="757.9" y="638.9" width="3.1" height="7.2" fill="#c6c6c6"/>
<rect x="766.2" y="638.9" width="3.1" height="7.2" fill="#c6c6c6"/>
<rect x="774.6" y="638.9" width="3.1" height="7.2" fill="#c6c6c6"/>
<rect x="782.9" y="638.9" width="3.1" height="7.2" fill="#c6c6c6"/>
<rect x="751.8" y="602.6" width="6" height="0.8" fill="#d0d0d0"/>
<path d="M893.6 566.8H982V649.4H893.6Z" fill="none" stroke="#cfcfcf" stroke-width=".8"/>
<rect x="909.6" y="558.1" width="6.5" height="8.2" fill="#c2c2c2"/>
<rect x="925.9" y="558.1" width="6.5" height="8.2" fill="#c2c2c2"/>
<rect x="942.4" y="558.1" width="6.5" height="8.2" fill="#c2c2c2"/>
<rect x="959.3" y="558.1" width="6.5" height="8.2" fill="#c2c2c2"/>
<rect x="891.6" y="567.6" width="11.5" height="19.9" fill="#c2c2c2"/>
<rect x="972.2" y="567.6" width="11.1" height="19.9" fill="#c2c2c2"/>
<rect x="891.5" y="621.9" width="11.6" height="19.1" fill="#c2c2c2"/>
<rect x="972.2" y="621.9" width="11.1" height="19.1" fill="#c2c2c2"/>
<rect x="907" y="638.9" width="3.1" height="7.2" fill="#c6c6c6"/>
<rect x="915.3" y="638.9" width="3.1" height="7.2" fill="#c6c6c6"/>
<rect x="923.6" y="638.9" width="3.1" height="7.2" fill="#c6c6c6"/>
<rect x="931.9" y="638.9" width="3.1" height="7.2" fill="#c6c6c6"/>
<rect x="940.2" y="638.9" width="3.1" height="7.2" fill="#c6c6c6"/>
<rect x="948.5" y="638.9" width="3.1" height="7.2" fill="#c6c6c6"/>
<rect x="956.9" y="638.9" width="3.1" height="7.2" fill="#c6c6c6"/>
<rect x="965.2" y="638.9" width="3.1" height="7.2" fill="#c6c6c6"/>
<rect x="934.1" y="602.6" width="6" height="0.8" fill="#d0d0d0"/>
<rect x="682.4" y="560.6" width="11.2" height="8" fill="#d4d4d4"/>
<rect x="684.2" y="562.4" width="3" height="4.2" fill="#bcbcbc"/>
<rect x="688.8" y="562.4" width="3" height="4.2" fill="#bcbcbc"/>
<path d="M680.8 570.6V558.2H695.4V570.6 M683 571.8Q688 567.4 693.2 571.8" fill="none" stroke="#111" stroke-width="1.2"/>
<circle cx="680.8" cy="558.2" r="0.9" fill="#111"/>
<circle cx="695.4" cy="558.2" r="0.9" fill="#111"/>
<circle cx="680.8" cy="571.4" r="1" fill="#111"/>
<circle cx="695.4" cy="571.4" r="1" fill="#111"/>
<circle cx="691" cy="556.6" r="0.7" fill="#111"/>
<rect x="680.2" y="582.3" width="8.7" height="3" fill="#c6c6c6"/>
<rect x="680.2" y="614.9" width="8.7" height="2.8" fill="#c6c6c6"/>
<path d="M690.5 582.1H704.7V588 M704.7 605.5V617.3H690.5 M681.6 585.3V614.9" fill="none" stroke="#111" stroke-width="1.2"/>
<circle cx="706" cy="587" r="1.1" fill="#111"/>
<rect x="700" y="591" width="7.3" height="2.1" fill="#bdbdbd"/>
<rect x="700" y="594.4" width="7.3" height="2.1" fill="#bdbdbd"/>
<rect x="700" y="597.7" width="7.3" height="2.1" fill="#bdbdbd"/>
<rect x="700" y="601" width="7.3" height="2.1" fill="#bdbdbd"/>
<rect x="700" y="604.4" width="7.3" height="2.1" fill="#bdbdbd"/>
<rect x="700" y="607.8" width="7.3" height="2.1" fill="#bdbdbd"/>
<path d="M704.7 589V609" stroke="#555" stroke-width=".7"/>
<rect x="690" y="598.6" width="5" height="0.8" fill="#c4c4c4"/>
<circle cx="807.8" cy="578.9" r="3.1" fill="#b4b4b4"/>
<path d="M806.2 578.9H809.4" stroke="#8a8a8a" stroke-width=".8"/>
<circle cx="807.8" cy="588.7" r="3.1" fill="#b4b4b4"/>
<path d="M806.2 588.7H809.4" stroke="#8a8a8a" stroke-width=".8"/>
<ellipse cx="806" cy="595.5" rx="3" ry="1.4" fill="#999"/>
<rect x="802.9" y="598.7" width="3.8" height="3.2" fill="#a4a4a4"/>
<rect x="807.7" y="598.7" width="3.8" height="3.2" fill="#a4a4a4"/>
<rect x="802.9" y="604.7" width="3.8" height="3.2" fill="#a4a4a4"/>
<rect x="807.7" y="604.7" width="3.8" height="3.2" fill="#a4a4a4"/>
<rect x="804" y="609.7" width="6.5" height="2.4" fill="#a4a4a4"/>
<rect x="802.9" y="614.2" width="3.8" height="3.1" fill="#a4a4a4"/>
<rect x="807.7" y="614.2" width="3.8" height="3.1" fill="#a4a4a4"/>
<rect x="813.2" y="605.4" width="2.6" height="1.9" fill="#a4a4a4"/>
<rect x="813.2" y="607.9" width="2.6" height="1.9" fill="#a4a4a4"/>
<rect x="817.4" y="601.4" width="3.6" height="3.6" fill="#a4a4a4"/>
<rect x="817.4" y="606" width="3.6" height="3.6" fill="#a4a4a4"/>
<rect x="822.6" y="601.4" width="3.7" height="3.6" fill="#a4a4a4"/>
<rect x="822.6" y="606" width="3.7" height="3.6" fill="#a4a4a4"/>
<rect x="828.4" y="601.4" width="2.1" height="3.6" fill="#a4a4a4"/>
<rect x="828.4" y="606" width="2.1" height="3.6" fill="#a4a4a4"/>
<rect x="831" y="601.4" width="2.7" height="3.6" fill="#a4a4a4"/>
<rect x="831" y="606" width="2.7" height="3.6" fill="#a4a4a4"/>
<rect x="835.2" y="601.4" width="2.2" height="3.6" fill="#a4a4a4"/>
<rect x="835.2" y="606" width="2.2" height="3.6" fill="#a4a4a4"/>
<rect x="831" y="600.4" width="5.5" height="1.2" fill="#999"/>
<rect x="839" y="603.6" width="5.6" height="1.4" fill="#999"/>
<rect x="839" y="607" width="5.6" height="2.2" fill="#a4a4a4"/>
<circle cx="848.4" cy="606.3" r="2.8" fill="#b4b4b4"/>
<path d="M846.8 606.3H850" stroke="#8a8a8a" stroke-width=".8"/>
<circle cx="854.9" cy="606.3" r="2.8" fill="#b4b4b4"/>
<path d="M853.3 606.3H856.5" stroke="#8a8a8a" stroke-width=".8"/>
<circle cx="861" cy="606.3" r="2.8" fill="#b4b4b4"/>
<path d="M859.4 606.3H862.6" stroke="#8a8a8a" stroke-width=".8"/>
<circle cx="845.6" cy="609.6" r="0.6" fill="#222"/>
<circle cx="852.4" cy="609.6" r="0.6" fill="#222"/>
<circle cx="858.6" cy="609.6" r="0.6" fill="#222"/>
<rect x="803.2" y="623.1" width="6.9" height="6.6" rx="2.2" fill="#cbcbcb"/>
<rect x="853.1" y="623.1" width="6.9" height="6.6" rx="2.2" fill="#cbcbcb"/>
<rect x="803.2" y="636.4" width="6.9" height="6.6" rx="2.2" fill="#cbcbcb"/>
<rect x="853.1" y="636.4" width="6.9" height="6.6" rx="2.2" fill="#cbcbcb"/>
<path d="M806.6 626.4V639.6 M856.6 626.4V639.6 M810 625.4H853 M810 640.8H853" fill="none" stroke="#cfcfcf" stroke-width=".7"/>
<rect x="812.2" y="624.2" width="1.5" height="2.7" fill="#b0b0b0"/>
<rect x="812.2" y="639.4" width="1.5" height="2.7" fill="#b0b0b0"/>
<rect x="814.7" y="624.2" width="1.5" height="2.7" fill="#b0b0b0"/>
<rect x="814.7" y="639.4" width="1.5" height="2.7" fill="#b0b0b0"/>
<rect x="817.3" y="624.2" width="1.5" height="2.7" fill="#b0b0b0"/>
<rect x="817.3" y="639.4" width="1.5" height="2.7" fill="#b0b0b0"/>
<rect x="819.8" y="624.2" width="1.5" height="2.7" fill="#b0b0b0"/>
<rect x="819.8" y="639.4" width="1.5" height="2.7" fill="#b0b0b0"/>
<rect x="822.3" y="624.2" width="1.5" height="2.7" fill="#b0b0b0"/>
<rect x="822.3" y="639.4" width="1.5" height="2.7" fill="#b0b0b0"/>
<rect x="824.9" y="624.2" width="1.5" height="2.7" fill="#b0b0b0"/>
<rect x="824.9" y="639.4" width="1.5" height="2.7" fill="#b0b0b0"/>
<rect x="827.4" y="624.2" width="1.5" height="2.7" fill="#b0b0b0"/>
<rect x="827.4" y="639.4" width="1.5" height="2.7" fill="#b0b0b0"/>
<rect x="829.9" y="624.2" width="1.5" height="2.7" fill="#b0b0b0"/>
<rect x="829.9" y="639.4" width="1.5" height="2.7" fill="#b0b0b0"/>
<rect x="832.4" y="624.2" width="1.5" height="2.7" fill="#b0b0b0"/>
<rect x="832.4" y="639.4" width="1.5" height="2.7" fill="#b0b0b0"/>
<rect x="835" y="624.2" width="1.5" height="2.7" fill="#b0b0b0"/>
<rect x="835" y="639.4" width="1.5" height="2.7" fill="#b0b0b0"/>
<rect x="837.5" y="624.2" width="1.5" height="2.7" fill="#b0b0b0"/>
<rect x="837.5" y="639.4" width="1.5" height="2.7" fill="#b0b0b0"/>
<rect x="840" y="624.2" width="1.5" height="2.7" fill="#b0b0b0"/>
<rect x="840" y="639.4" width="1.5" height="2.7" fill="#b0b0b0"/>
<rect x="842.6" y="624.2" width="1.5" height="2.7" fill="#b0b0b0"/>
<rect x="842.6" y="639.4" width="1.5" height="2.7" fill="#b0b0b0"/>
<rect x="845.1" y="624.2" width="1.5" height="2.7" fill="#b0b0b0"/>
<rect x="845.1" y="639.4" width="1.5" height="2.7" fill="#b0b0b0"/>
<rect x="847.6" y="624.2" width="1.5" height="2.7" fill="#b0b0b0"/>
<rect x="847.6" y="639.4" width="1.5" height="2.7" fill="#b0b0b0"/>
<rect x="850.2" y="624.2" width="1.5" height="2.7" fill="#b0b0b0"/>
<rect x="850.2" y="639.4" width="1.5" height="2.7" fill="#b0b0b0"/>
<circle cx="851.8" cy="622.1" r="1.1" fill="#111"/>
<rect x="829" y="632.8" width="4" height="0.8" fill="#bbb"/>
<circle cx="876.8" cy="641.2" r="7.5" fill="#cdcdcd"/>
<circle cx="876.8" cy="641.2" r="5" fill="#bdbdbd" stroke="#111" stroke-width="1.5"/>
<circle cx="878.9" cy="596" r="3" fill="#b4b4b4"/>
<path d="M877.3 596H880.5" stroke="#8a8a8a" stroke-width=".8"/>
<circle cx="887.8" cy="596" r="3" fill="#b4b4b4"/>
<path d="M886.2 596H889.4" stroke="#8a8a8a" stroke-width=".8"/>
<circle cx="877.6" cy="614.2" r="3" fill="#b4b4b4"/>
<path d="M876 614.2H879.2" stroke="#8a8a8a" stroke-width=".8"/>
<rect x="881.5" y="601" width="3.7" height="3.7" fill="#a4a4a4"/>
<rect x="886.2" y="601" width="3.7" height="3.7" fill="#a4a4a4"/>
<rect x="887.3" y="607.4" width="3.2" height="3.7" fill="#a4a4a4"/>
<rect x="887.3" y="612.1" width="3.2" height="3.7" fill="#a4a4a4"/>
<rect x="882.6" y="610.5" width="2.1" height="2.3" fill="#a4a4a4"/>
<rect x="882.6" y="613.5" width="2.1" height="2.3" fill="#a4a4a4"/>
<rect x="868.2" y="610.5" width="2.5" height="5.3" fill="#a4a4a4"/>
<path d="M804.2 389.4H863.6V407.3H860V410.5H807.9V407.3H804.2Z" fill="none" stroke="#c9c9c9" stroke-width=".7" stroke-dasharray="1.2 .8"/>
<rect x="809.3" y="389.8" width="2" height="5.4" fill="#c4c4c4"/>
<rect x="813.4" y="389.8" width="2" height="5.4" fill="#c4c4c4"/>
<rect x="817.5" y="389.8" width="2" height="5.4" fill="#c4c4c4"/>
<rect x="821.6" y="389.8" width="2" height="5.4" fill="#c4c4c4"/>
<rect x="825.7" y="389.8" width="2" height="5.4" fill="#c4c4c4"/>
<rect x="829.8" y="389.8" width="2" height="5.4" fill="#c4c4c4"/>
<rect x="833.8" y="389.8" width="2" height="5.4" fill="#c4c4c4"/>
<rect x="837.9" y="389.8" width="2" height="5.4" fill="#c4c4c4"/>
<rect x="842" y="389.8" width="2" height="5.4" fill="#c4c4c4"/>
<rect x="846.1" y="389.8" width="2" height="5.4" fill="#c4c4c4"/>
<rect x="850.2" y="389.8" width="2" height="5.4" fill="#c4c4c4"/>
<rect x="854.3" y="389.8" width="2" height="5.4" fill="#c4c4c4"/>
<rect x="858.4" y="389.8" width="2" height="5.4" fill="#c4c4c4"/>
<rect x="804.2" y="391" width="2.6" height="5.8" fill="#c4c4c4"/>
<rect x="861" y="391" width="2.6" height="5.8" fill="#c4c4c4"/>
<rect x="811.4" y="409.4" width="2" height="4.2" fill="#c0c0c0"/>
<rect x="815.4" y="409.4" width="2" height="4.2" fill="#c0c0c0"/>
<rect x="819.4" y="409.4" width="2" height="4.2" fill="#c0c0c0"/>
<rect x="823.4" y="409.4" width="2" height="4.2" fill="#c0c0c0"/>
<rect x="827.4" y="409.4" width="2" height="4.2" fill="#c0c0c0"/>
<rect x="831.4" y="409.4" width="2" height="4.2" fill="#c0c0c0"/>
<rect x="835.4" y="409.4" width="2" height="4.2" fill="#c0c0c0"/>
<rect x="839.4" y="409.4" width="2" height="4.2" fill="#c0c0c0"/>
<rect x="843.4" y="409.4" width="2" height="4.2" fill="#c0c0c0"/>
<rect x="847.4" y="409.4" width="2" height="4.2" fill="#c0c0c0"/>
<rect x="851.4" y="409.4" width="2" height="4.2" fill="#c0c0c0"/>
<rect x="855.4" y="409.4" width="2" height="4.2" fill="#c0c0c0"/>
<circle cx="859.4" cy="388.5" r="0.8" fill="#111"/>
<rect x="830.6" y="401.6" width="3.8" height="0.7" fill="#ccc"/>
<circle cx="872.6" cy="376.3" r="2.9" fill="#b4b4b4"/>
<path d="M871 376.3H874.2" stroke="#8a8a8a" stroke-width=".8"/>
<path d="M869 376.3H876.5 M875 377.8L876.8 379.3" stroke="#8a8a8a" stroke-width=".6"/>
<circle cx="872.6" cy="383.7" r="2.9" fill="#b4b4b4"/>
<path d="M871 383.7H874.2" stroke="#8a8a8a" stroke-width=".8"/>
<path d="M869 383.7H876.5 M875 385.2L876.8 386.7" stroke="#8a8a8a" stroke-width=".6"/>
<rect x="868.4" y="388.4" width="3.7" height="3.2" fill="#a4a4a4"/>
<rect x="873.1" y="388.4" width="3.7" height="3.2" fill="#a4a4a4"/>
<rect x="868.4" y="394.7" width="3.7" height="3.2" fill="#a4a4a4"/>
<rect x="873.1" y="394.7" width="3.7" height="3.2" fill="#a4a4a4"/>
<rect x="866.8" y="399.4" width="5.2" height="2.2" fill="#999"/>
<rect x="870.3" y="402.6" width="2.5" height="2.3" fill="#a4a4a4"/>
<rect x="870.3" y="405.6" width="2.5" height="2.3" fill="#a4a4a4"/>
<rect x="876.8" y="401" width="3.7" height="3.7" fill="#a4a4a4"/>
<rect x="881.5" y="401" width="3.7" height="3.7" fill="#a4a4a4"/>
<rect x="887.8" y="394.7" width="3.7" height="3.2" fill="#a4a4a4"/>
<rect x="892.6" y="394.7" width="3.7" height="3.2" fill="#a4a4a4"/>
<rect x="887.8" y="401" width="3.7" height="3.7" fill="#a4a4a4"/>
<rect x="892.6" y="401" width="3.7" height="3.7" fill="#a4a4a4"/>
<rect x="899.4" y="396.8" width="2.1" height="2.3" fill="#a4a4a4"/>
<rect x="899.4" y="399.7" width="2.1" height="2.3" fill="#a4a4a4"/>
<rect x="902.9" y="393.7" width="2.1" height="2.3" fill="#a4a4a4"/>
<rect x="902.9" y="396.6" width="2.1" height="2.3" fill="#a4a4a4"/>
<rect x="902.9" y="400.5" width="2.1" height="2.3" fill="#a4a4a4"/>
<rect x="902.9" y="403.5" width="2.1" height="2.3" fill="#a4a4a4"/>
<rect x="906.8" y="395.2" width="3.9" height="3.4" fill="#a4a4a4"/>
<rect x="911.8" y="395.2" width="3.9" height="3.4" fill="#a4a4a4"/>
<rect x="906.8" y="400.7" width="3.9" height="3.5" fill="#a4a4a4"/>
<rect x="911.8" y="400.7" width="3.9" height="3.5" fill="#a4a4a4"/>
<rect x="930.4" y="393.3" width="4.4" height="6.9" rx=".8" fill="#c4c4c4" stroke="#111" stroke-width="1.3"/>
<circle cx="929.4" cy="401.4" r="0.6" fill="#222"/>
<rect x="938.9" y="392.9" width="3.9" height="3.4" fill="#a4a4a4"/>
<rect x="943.9" y="392.9" width="3.9" height="3.4" fill="#a4a4a4"/>
<rect x="938.9" y="398.6" width="3.9" height="3.5" fill="#a4a4a4"/>
<rect x="943.9" y="398.6" width="3.9" height="3.5" fill="#a4a4a4"/>
<rect x="929.9" y="403.1" width="5.3" height="2.5" fill="#999"/>
<rect x="929.9" y="406.8" width="5.3" height="2.4" fill="#999"/>
<circle cx="954.4" cy="407.9" r="3" fill="#b4b4b4"/>
<path d="M952.8 407.9H956" stroke="#8a8a8a" stroke-width=".8"/>
<path d="M815.8 475.2V423Q815.8 419.6 819.2 419.6H829.2Q832.6 419.6 832.6 423V475.2Z" fill="none" stroke="#c4c4c4" stroke-width=".7"/>
<path d="M815.3 425.6V423Q815.3 419.4 819 419.4H820.5V425.6Z M833.7 425.6V423Q833.7 419.4 830 419.4H828.4V425.6Z" fill="#c6c6c6"/>
<rect x="815.3" y="469.4" width="5.2" height="5.8" fill="#c6c6c6"/>
<rect x="828.4" y="469.4" width="5.3" height="5.8" fill="#c6c6c6"/>
<rect x="814.6" y="427.2" width="3.3" height="1.3" fill="#bdbdbd"/>
<rect x="830.9" y="427.2" width="3.3" height="1.3" fill="#bdbdbd"/>
<rect x="814.6" y="429.7" width="3.3" height="1.3" fill="#bdbdbd"/>
<rect x="830.9" y="429.7" width="3.3" height="1.3" fill="#bdbdbd"/>
<rect x="814.6" y="432.1" width="3.3" height="1.3" fill="#bdbdbd"/>
<rect x="830.9" y="432.1" width="3.3" height="1.3" fill="#bdbdbd"/>
<rect x="814.6" y="434.6" width="3.3" height="1.3" fill="#bdbdbd"/>
<rect x="830.9" y="434.6" width="3.3" height="1.3" fill="#bdbdbd"/>
<rect x="814.6" y="437" width="3.3" height="1.3" fill="#bdbdbd"/>
<rect x="830.9" y="437" width="3.3" height="1.3" fill="#bdbdbd"/>
<rect x="814.6" y="439.5" width="3.3" height="1.3" fill="#bdbdbd"/>
<rect x="830.9" y="439.5" width="3.3" height="1.3" fill="#bdbdbd"/>
<rect x="814.6" y="442" width="3.3" height="1.3" fill="#bdbdbd"/>
<rect x="830.9" y="442" width="3.3" height="1.3" fill="#bdbdbd"/>
<rect x="814.6" y="444.4" width="3.3" height="1.3" fill="#bdbdbd"/>
<rect x="830.9" y="444.4" width="3.3" height="1.3" fill="#bdbdbd"/>
<rect x="814.6" y="446.9" width="3.3" height="1.3" fill="#bdbdbd"/>
<rect x="830.9" y="446.9" width="3.3" height="1.3" fill="#bdbdbd"/>
<rect x="814.6" y="449.3" width="3.3" height="1.3" fill="#bdbdbd"/>
<rect x="830.9" y="449.3" width="3.3" height="1.3" fill="#bdbdbd"/>
<rect x="814.6" y="451.8" width="3.3" height="1.3" fill="#bdbdbd"/>
<rect x="830.9" y="451.8" width="3.3" height="1.3" fill="#bdbdbd"/>
<rect x="814.6" y="454.3" width="3.3" height="1.3" fill="#bdbdbd"/>
<rect x="830.9" y="454.3" width="3.3" height="1.3" fill="#bdbdbd"/>
<rect x="814.6" y="456.7" width="3.3" height="1.3" fill="#bdbdbd"/>
<rect x="830.9" y="456.7" width="3.3" height="1.3" fill="#bdbdbd"/>
<rect x="814.6" y="459.2" width="3.3" height="1.3" fill="#bdbdbd"/>
<rect x="830.9" y="459.2" width="3.3" height="1.3" fill="#bdbdbd"/>
<rect x="814.6" y="461.6" width="3.3" height="1.3" fill="#bdbdbd"/>
<rect x="830.9" y="461.6" width="3.3" height="1.3" fill="#bdbdbd"/>
<rect x="814.6" y="464.1" width="3.3" height="1.3" fill="#bdbdbd"/>
<rect x="830.9" y="464.1" width="3.3" height="1.3" fill="#bdbdbd"/>
<rect x="814.6" y="466.6" width="3.3" height="1.3" fill="#bdbdbd"/>
<rect x="830.9" y="466.6" width="3.3" height="1.3" fill="#bdbdbd"/>
<circle cx="814.6" cy="427" r="0.7" fill="#111"/>
<rect x="820.6" y="446.6" width="7" height="0.8" fill="#c9c9c9"/>
<rect x="836.3" y="417.9" width="3.7" height="3.6" fill="#a4a4a4"/>
<rect x="841" y="417.9" width="3.7" height="3.6" fill="#a4a4a4"/>
<rect x="836.3" y="423.1" width="3.7" height="3.2" fill="#a4a4a4"/>
<rect x="841" y="423.1" width="3.7" height="3.2" fill="#a4a4a4"/>
<circle cx="840.5" cy="433.2" r="2.9" fill="#b4b4b4"/>
<path d="M838.9 433.2H842.1" stroke="#8a8a8a" stroke-width=".8"/>
<path d="M836.6 433.2H844.4" stroke="#8a8a8a" stroke-width=".6"/>
<circle cx="843.6" cy="436" r="0.5" fill="#222"/>
<circle cx="840.5" cy="440.8" r="2.9" fill="#b4b4b4"/>
<path d="M838.9 440.8H842.1" stroke="#8a8a8a" stroke-width=".8"/>
<path d="M836.6 440.8H844.4" stroke="#8a8a8a" stroke-width=".6"/>
<circle cx="843.6" cy="443.6" r="0.5" fill="#222"/>
<circle cx="840.5" cy="448.9" r="2.9" fill="#b4b4b4"/>
<path d="M838.9 448.9H842.1" stroke="#8a8a8a" stroke-width=".8"/>
<path d="M836.6 448.9H844.4" stroke="#8a8a8a" stroke-width=".6"/>
<circle cx="843.6" cy="451.7" r="0.5" fill="#222"/>
<circle cx="840.5" cy="456.8" r="2.9" fill="#b4b4b4"/>
<path d="M838.9 456.8H842.1" stroke="#8a8a8a" stroke-width=".8"/>
<path d="M836.6 456.8H844.4" stroke="#8a8a8a" stroke-width=".6"/>
<circle cx="843.6" cy="459.6" r="0.5" fill="#222"/>
<circle cx="840.5" cy="464.5" r="2.9" fill="#b4b4b4"/>
<path d="M838.9 464.5H842.1" stroke="#8a8a8a" stroke-width=".8"/>
<path d="M836.6 464.5H844.4" stroke="#8a8a8a" stroke-width=".6"/>
<circle cx="843.6" cy="467.3" r="0.5" fill="#222"/>
<rect x="935.5" y="460.3" width="2.4" height="1.9" fill="#a4a4a4"/>
<rect x="935.5" y="462.8" width="2.4" height="1.9" fill="#a4a4a4"/>
<rect x="935.5" y="467.3" width="2.4" height="2" fill="#a4a4a4"/>
<rect x="935.5" y="469.9" width="2.4" height="2" fill="#a4a4a4"/>
<rect x="939.4" y="460.3" width="2.4" height="1.9" fill="#a4a4a4"/>
<rect x="939.4" y="462.8" width="2.4" height="1.9" fill="#a4a4a4"/>
<rect x="939.4" y="467.3" width="2.4" height="2" fill="#a4a4a4"/>
<rect x="939.4" y="469.9" width="2.4" height="2" fill="#a4a4a4"/>
<rect x="943.3" y="460.3" width="2.4" height="1.9" fill="#a4a4a4"/>
<rect x="943.3" y="462.8" width="2.4" height="1.9" fill="#a4a4a4"/>
<rect x="943.3" y="467.3" width="2.4" height="2" fill="#a4a4a4"/>
<rect x="943.3" y="469.9" width="2.4" height="2" fill="#a4a4a4"/>
<rect x="948.3" y="416.6" width="8.4" height="2.8" fill="#c9c9c9"/>
<rect x="948.3" y="448.4" width="8.4" height="3.2" fill="#c9c9c9"/>
<path d="M949.2 419.4V448.4 M957 416.3H972.9V422.5 M972.9 443.5V451.6H957" fill="none" stroke="#111" stroke-width="1.2"/>
<circle cx="974.2" cy="421.6" r="1" fill="#111"/>
<rect x="968.1" y="424.2" width="6.9" height="1.9" fill="#bdbdbd"/>
<rect x="968.1" y="427.3" width="6.9" height="1.9" fill="#bdbdbd"/>
<rect x="968.1" y="430.4" width="6.9" height="1.9" fill="#bdbdbd"/>
<rect x="968.1" y="433.5" width="6.9" height="1.9" fill="#bdbdbd"/>
<rect x="968.1" y="436.6" width="6.9" height="1.9" fill="#bdbdbd"/>
<rect x="968.1" y="439.7" width="6.9" height="1.9" fill="#bdbdbd"/>
<path d="M972.9 423V443" stroke="#666" stroke-width=".7"/>
<rect x="955" y="432.8" width="4.4" height="0.8" fill="#ccc"/>
<rect x="956.5" y="360.2" width="9" height="15.1" rx="4.5" fill="#c6c6c6"/>
<rect x="958.1" y="361.8" width="5.8" height="11.9" rx="2.9" fill="#b9b9b9" stroke="#2e2e2e" stroke-width="1.1"/>
<rect x="956.5" y="381.5" width="8.5" height="15.9" rx="4.2" fill="#c6c6c6"/>
<rect x="958.1" y="383.1" width="5.3" height="12.7" rx="2.6" fill="#b9b9b9" stroke="#2e2e2e" stroke-width="1.1"/>
<rect x="1019.4" y="360.2" width="8.7" height="15.1" rx="4.3" fill="#c6c6c6"/>
<rect x="1021" y="361.8" width="5.5" height="11.9" rx="2.8" fill="#b9b9b9" stroke="#2e2e2e" stroke-width="1.1"/>
<rect x="1019.9" y="381.5" width="8.2" height="15.9" rx="4.1" fill="#c6c6c6"/>
<rect x="1021.5" y="383.1" width="5" height="12.7" rx="2.5" fill="#b9b9b9" stroke="#2e2e2e" stroke-width="1.1"/>
<rect x="969.2" y="392.1" width="10.5" height="8.4" rx="4.2" fill="#c6c6c6"/>
<rect x="970.8" y="393.7" width="7.3" height="5.2" rx="2.6" fill="#b9b9b9" stroke="#2e2e2e" stroke-width="1.1"/>
<rect x="1005.3" y="392.1" width="10.5" height="8.4" rx="4.2" fill="#c6c6c6"/>
<rect x="1006.9" y="393.7" width="7.3" height="5.2" rx="2.6" fill="#b9b9b9" stroke="#2e2e2e" stroke-width="1.1"/>
<circle cx="986.6" cy="398.9" r="3.2" fill="#b4b4b4"/>
<path d="M985 398.9H988.2" stroke="#8a8a8a" stroke-width=".8"/>
<circle cx="997.6" cy="397.9" r="3.2" fill="#b4b4b4"/>
<path d="M996 397.9H999.2" stroke="#8a8a8a" stroke-width=".8"/>
<circle cx="954.3" cy="408.1" r="3" fill="#b4b4b4"/>
<path d="M952.7 408.1H955.9" stroke="#8a8a8a" stroke-width=".8"/>
<rect x="960.8" y="403.1" width="3.1" height="3.2" fill="#a4a4a4"/>
<rect x="960.8" y="407.1" width="3.1" height="3.2" fill="#a4a4a4"/>
<rect x="966" y="403.1" width="3.2" height="3.2" fill="#a4a4a4"/>
<rect x="966" y="407.1" width="3.2" height="3.2" fill="#a4a4a4"/>
<rect x="973.9" y="404.9" width="11.6" height="6.1" fill="#ededed" stroke="#bbb" stroke-width=".6"/>
<rect x="974.5" y="405.5" width="2.5" height="4.9" fill="#c4c4c4"/>
<rect x="982.4" y="405.5" width="2.5" height="4.9" fill="#c4c4c4"/>
<path d="M977 408H982.4" stroke="#bbb" stroke-width=".6"/>
<rect x="993.4" y="404.5" width="11.6" height="7.6" fill="none" stroke="#cfcfcf" stroke-width=".6"/>
<rect x="990.4" y="406.7" width="4.2" height="3.8" fill="#d2d2d2"/>
<rect x="1003.8" y="406.7" width="4.2" height="3.8" fill="#c9c9c9"/>
<rect x="997" y="408.1" width="4" height="0.7" fill="#c4c4c4"/>
<path d="M989.2 412.6H992.9" stroke="#111" stroke-width="1.1"/>
<path d="M1005.8 411.7H1009.4 M1007.6 409.9V413.5" stroke="#111" stroke-width="1.1"/>
<rect x="993.4" y="415" width="11.6" height="7.6" fill="none" stroke="#cfcfcf" stroke-width=".6"/>
<rect x="990.4" y="417.2" width="4.2" height="3.8" fill="#d2d2d2"/>
<rect x="1003.8" y="417.2" width="4.2" height="3.8" fill="#c9c9c9"/>
<rect x="997" y="418.6" width="4" height="0.7" fill="#c4c4c4"/>
<path d="M989.2 423.1H992.9" stroke="#111" stroke-width="1.1"/>
<path d="M1005.8 422.2H1009.4 M1007.6 420.4V424" stroke="#111" stroke-width="1.1"/>
<text x="978" y="417.4" font-family="Liberation Sans, sans-serif" font-weight="700" font-size="5.5" fill="#111" textLength="7.6" lengthAdjust="spacingAndGlyphs">JE31</text>
<rect x="1012.3" y="405.2" width="3.3" height="4.2" fill="#a4a4a4"/>
<rect x="1016.4" y="405.2" width="3.3" height="4.2" fill="#a4a4a4"/>
<circle cx="1013.4" cy="414.7" r="3" fill="#b4b4b4"/>
<path d="M1011.8 414.7H1015" stroke="#8a8a8a" stroke-width=".8"/>
<circle cx="1023.4" cy="413.1" r="3" fill="#b4b4b4"/>
<path d="M1021.8 413.1H1025" stroke="#8a8a8a" stroke-width=".8"/>
<rect x="1012.8" y="418.9" width="2.2" height="2.3" fill="#a4a4a4"/>
<rect x="1012.8" y="421.9" width="2.2" height="2.3" fill="#a4a4a4"/>
<rect x="1016.5" y="418.9" width="2.1" height="2.3" fill="#a4a4a4"/>
<rect x="1016.5" y="421.9" width="2.1" height="2.3" fill="#a4a4a4"/>
<rect x="1019.9" y="418.4" width="2.4" height="1.8" fill="#a4a4a4"/>
<rect x="1019.9" y="420.8" width="2.4" height="1.8" fill="#a4a4a4"/>
<rect x="1023.4" y="418.4" width="2.4" height="1.8" fill="#a4a4a4"/>
<rect x="1023.4" y="420.8" width="2.4" height="1.8" fill="#a4a4a4"/>
<rect x="1015.5" y="426.4" width="4.9" height="1" fill="#999"/>
<rect x="978.2" y="419.4" width="8.3" height="2.1" fill="#888"/>
<rect x="978.2" y="422.8" width="3" height="2.4" fill="#a4a4a4"/>
<rect x="982" y="422.8" width="3" height="2.4" fill="#a4a4a4"/>
<rect x="985.8" y="421.5" width="1.6" height="4.5" fill="#888"/>
<rect x="989.8" y="426.4" width="2.7" height="2.2" fill="#a4a4a4"/>
<rect x="993.3" y="426.4" width="2.7" height="2.2" fill="#a4a4a4"/>
<rect x="989.8" y="430.4" width="2.7" height="2.2" fill="#a4a4a4"/>
<rect x="993.3" y="430.4" width="2.7" height="2.2" fill="#a4a4a4"/>
<rect x="979.6" y="428.3" width="7.4" height="4.6" fill="#ededed" stroke="#999" stroke-width=".6"/>
<rect x="980.2" y="429" width="2.2" height="3.2" fill="#bbb"/>
<rect x="984.2" y="429" width="2.2" height="3.2" fill="#bbb"/>
<circle cx="987.6" cy="427.8" r="0.6" fill="#222"/>
<rect x="982.2" y="434.6" width="2.1" height="2" fill="#a4a4a4"/>
<rect x="984.9" y="434.6" width="2.1" height="2" fill="#a4a4a4"/>
<rect x="989.8" y="434.6" width="2.7" height="2.2" fill="#a4a4a4"/>
<rect x="993.3" y="434.6" width="2.7" height="2.2" fill="#a4a4a4"/>
<rect x="982.2" y="438.4" width="2.1" height="2" fill="#a4a4a4"/>
<rect x="984.9" y="438.4" width="2.1" height="2" fill="#a4a4a4"/>
<rect x="989.8" y="438.6" width="2.7" height="2.2" fill="#a4a4a4"/>
<rect x="993.3" y="438.6" width="2.7" height="2.2" fill="#a4a4a4"/>
<rect x="979.6" y="442.4" width="7.4" height="4.6" fill="#ededed" stroke="#999" stroke-width=".6"/>
<rect x="980.2" y="443.1" width="2.2" height="3.2" fill="#bbb"/>
<rect x="984.2" y="443.1" width="2.2" height="3.2" fill="#bbb"/>
<rect x="982.2" y="449" width="4.8" height="1.6" fill="#999"/>
<circle cx="1000.8" cy="431.6" r="3" fill="#b4b4b4"/>
<path d="M999.2 431.6H1002.4" stroke="#8a8a8a" stroke-width=".8"/>
<circle cx="998.9" cy="440.2" r="3" fill="#b4b4b4"/>
<path d="M997.3 440.2H1000.5" stroke="#8a8a8a" stroke-width=".8"/>
<circle cx="991.6" cy="446" r="3" fill="#b4b4b4"/>
<path d="M990 446H993.2" stroke="#8a8a8a" stroke-width=".8"/>
<circle cx="991.6" cy="454.2" r="3" fill="#b4b4b4"/>
<path d="M990 454.2H993.2" stroke="#8a8a8a" stroke-width=".8"/>
<circle cx="982.9" cy="456.3" r="3" fill="#b4b4b4"/>
<path d="M981.3 456.3H984.5" stroke="#8a8a8a" stroke-width=".8"/>
<rect x="996.6" y="446" width="2.2" height="2.2" fill="#a4a4a4"/>
<rect x="996.6" y="448.8" width="2.2" height="2.2" fill="#a4a4a4"/>
<rect x="996.6" y="453" width="2.2" height="2.2" fill="#a4a4a4"/>
<rect x="996.6" y="455.8" width="2.2" height="2.2" fill="#a4a4a4"/>
<rect x="990.2" y="469.8" width="2.6" height="2.1" fill="#a4a4a4"/>
<rect x="993.4" y="469.8" width="2.6" height="2.1" fill="#a4a4a4"/>
<rect x="990.2" y="474.2" width="2.6" height="2.3" fill="#a4a4a4"/>
<rect x="993.4" y="474.2" width="2.6" height="2.3" fill="#a4a4a4"/>
<circle cx="1084.7" cy="414.2" r="10" fill="none" stroke="#b0b0b0" stroke-width=".6"/>
<ellipse cx="1084.7" cy="414.2" rx="4.8" ry="3.2" fill="#c4c4c4"/>
<path d="M1078.8 414.2H1090.6" stroke="#9a9a9a" stroke-width=".7"/>
<circle cx="1080.5" cy="451.9" r="5.1" fill="#bdbdbd" stroke="#111" stroke-width="1.6"/>
<rect x="1043.6" y="460.5" width="11.2" height="11.1" fill="#ececec"/>
<rect x="1044.4" y="460.8" width="2.2" height="2.6" fill="#c4c4c4"/>
<rect x="1044.4" y="468.8" width="2.2" height="2.6" fill="#c4c4c4"/>
<rect x="1048" y="460.8" width="2.2" height="2.6" fill="#c4c4c4"/>
<rect x="1048" y="468.8" width="2.2" height="2.6" fill="#c4c4c4"/>
<rect x="1051.6" y="460.8" width="2.2" height="2.6" fill="#c4c4c4"/>
<rect x="1051.6" y="468.8" width="2.2" height="2.6" fill="#c4c4c4"/>
<rect x="1044" y="464.6" width="2.4" height="2.8" fill="#c4c4c4"/>
<rect x="1052.4" y="464.6" width="2.4" height="2.8" fill="#c4c4c4"/>
<rect x="1047.4" y="465.2" width="4" height="1.6" fill="#d0d0d0"/>
<path d="M1042.5 463V472.7H1046.5 M1051.5 472.7H1055.8V468.5 M1055.8 464.5V459.4H1052.5 M1042.5 459.4H1046" fill="none" stroke="#111" stroke-width="1.2"/>
<circle cx="1042" cy="458.9" r="0.8" fill="#111"/>
<rect x="1046" y="455" width="5.8" height="2.4" fill="#999"/>
<rect x="1034.9" y="463.5" width="5.3" height="2.3" fill="#999"/>
<rect x="1038.4" y="467.7" width="2.3" height="2.3" fill="#a4a4a4"/>
<rect x="1038.4" y="470.6" width="2.3" height="2.3" fill="#a4a4a4"/>
<rect x="1058.1" y="460.3" width="2.4" height="2.4" fill="#a4a4a4"/>
<rect x="1058.1" y="463.4" width="2.4" height="2.4" fill="#a4a4a4"/>
<rect x="1040.2" y="475" width="5.8" height="2.2" fill="#999"/>
<rect x="1047.9" y="475" width="5.5" height="2.2" fill="#999"/>
<circle cx="952.3" cy="492.1" r="3.4" fill="#b4b4b4"/>
<path d="M950.7 492.1H953.9" stroke="#8a8a8a" stroke-width=".8"/>
<circle cx="962.1" cy="492.1" r="3.4" fill="#b4b4b4"/>
<path d="M960.5 492.1H963.7" stroke="#8a8a8a" stroke-width=".8"/>
<rect x="949.4" y="501.5" width="6.2" height="11.8" fill="#e9e9e9" stroke="#c2c2c2" stroke-width=".6"/>
<rect x="949.4" y="501.5" width="6.2" height="2.5" fill="#c4c4c4"/>
<rect x="949.4" y="510.8" width="6.2" height="2.5" fill="#c4c4c4"/>
<rect x="952" y="505" width="1" height="5" fill="#c9c9c9"/>
<rect x="957.6" y="501.5" width="6.2" height="11.8" fill="#e9e9e9" stroke="#c2c2c2" stroke-width=".6"/>
<rect x="957.6" y="501.5" width="6.2" height="2.5" fill="#c4c4c4"/>
<rect x="957.6" y="510.8" width="6.2" height="2.5" fill="#c4c4c4"/>
<rect x="960.2" y="505" width="1" height="5" fill="#c9c9c9"/>
<rect x="922" y="492" width="2.4" height="2.5" fill="#a4a4a4"/>
<rect x="922" y="495.1" width="2.4" height="2.5" fill="#a4a4a4"/>
<rect x="926.8" y="490.6" width="5.6" height="2" fill="#999"/>
<rect x="926" y="495.2" width="5.6" height="2" fill="#999"/>
<rect x="917.2" y="498.8" width="5.6" height="1.6" fill="#999"/>
<rect x="924.4" y="500.6" width="5.6" height="2" fill="#999"/>
<rect x="941.8" y="500.6" width="5.6" height="2" fill="#999"/>
<rect x="915.6" y="505.8" width="5.6" height="2" fill="#999"/>
<rect x="923.2" y="504.2" width="2.4" height="2.7" fill="#a4a4a4"/>
<rect x="923.2" y="507.7" width="2.4" height="2.7" fill="#a4a4a4"/>
<rect x="927.4" y="504.6" width="5.6" height="2.2" fill="#999"/>
<rect x="927.4" y="508.4" width="5.6" height="2.2" fill="#999"/>
<rect x="934.6" y="504.6" width="5.6" height="2.2" fill="#999"/>
<rect x="934.6" y="508.4" width="5.6" height="2.2" fill="#999"/>
<rect x="941.8" y="504.6" width="5.6" height="2.2" fill="#999"/>
<rect x="941.8" y="508.4" width="5.6" height="2.2" fill="#999"/>
<rect x="934.6" y="512.2" width="5.6" height="2" fill="#999"/>
<rect x="918" y="511.2" width="2.4" height="2.4" fill="#a4a4a4"/>
<rect x="918" y="514.2" width="2.4" height="2.4" fill="#a4a4a4"/>
<rect x="933.8" y="518.5" width="5.6" height="1.7" fill="#999"/>
<rect x="940.2" y="517" width="2.4" height="2.5" fill="#a4a4a4"/>
<rect x="940.2" y="520.1" width="2.4" height="2.5" fill="#a4a4a4"/>
<rect x="914.4" y="525.2" width="3.6" height="3.8" fill="#a4a4a4"/>
<rect x="914.4" y="530" width="3.6" height="3.8" fill="#a4a4a4"/>
<rect x="919.2" y="521.2" width="5.2" height="4.4" fill="#a4a4a4"/>
<rect x="919.2" y="526.8" width="5.2" height="4.4" fill="#a4a4a4"/>
<rect x="926.4" y="521.8" width="3.4" height="3.8" fill="#a4a4a4"/>
<rect x="926.4" y="526.6" width="3.4" height="3.8" fill="#a4a4a4"/>
<rect x="932" y="518.5" width="5.6" height="12" fill="#e9e9e9" stroke="#c2c2c2" stroke-width=".6"/>
<rect x="932" y="518.5" width="5.6" height="2.5" fill="#c4c4c4"/>
<rect x="932" y="528" width="5.6" height="2.5" fill="#c4c4c4"/>
<rect x="940.2" y="523.7" width="3.7" height="3.7" fill="#a4a4a4"/>
<rect x="944.9" y="523.7" width="3.7" height="3.7" fill="#a4a4a4"/>
<rect x="952.4" y="523.7" width="3.7" height="3.7" fill="#a4a4a4"/>
<rect x="957.1" y="523.7" width="3.7" height="3.7" fill="#a4a4a4"/>
<rect x="940.2" y="529.2" width="5.6" height="1.6" fill="#999"/>
<rect x="947" y="529.2" width="5.6" height="1.6" fill="#999"/>
<rect x="956.4" y="529.2" width="4.6" height="1.6" fill="#999"/>
<rect x="814.2" y="497.3" width="12.1" height="5.3" fill="#ededed" stroke="#bdbdbd" stroke-width=".7"/>
<rect x="815" y="498" width="2.6" height="4" fill="#c6c6c6"/>
<rect x="823" y="498" width="2.6" height="4" fill="#c6c6c6"/>
<path d="M817.6 500H823" stroke="#bbb" stroke-width=".6"/>
<rect x="830.5" y="498.4" width="3.8" height="3.1" fill="#a4a4a4"/>
<rect x="835.3" y="498.4" width="3.8" height="3.1" fill="#a4a4a4"/>
<rect x="842.1" y="498.4" width="3.8" height="3.1" fill="#a4a4a4"/>
<rect x="846.9" y="498.4" width="3.8" height="3.1" fill="#a4a4a4"/>
<rect x="813.1" y="504.8" width="13.7" height="5.8" fill="#c0c0c0"/>
<rect x="813.1" y="517.4" width="13.7" height="6" fill="#c0c0c0"/>
<rect x="819.4" y="510.6" width="1.2" height="6.8" fill="#c9c9c9"/>
<circle cx="829.7" cy="504.2" r="1" fill="#111"/>
<rect x="836.3" y="505.8" width="4.9" height="16.3" fill="#c6c6c6"/>
<rect x="836.3" y="512.8" width="4.9" height="1" fill="#aaa"/>
<rect x="831" y="506" width="3.6" height="1" fill="#c4c4c4"/>
<rect x="843" y="506" width="3.6" height="1" fill="#c4c4c4"/>
<rect x="831" y="508.5" width="3.6" height="1" fill="#c4c4c4"/>
<rect x="843" y="508.5" width="3.6" height="1" fill="#c4c4c4"/>
<rect x="831" y="511" width="3.6" height="1" fill="#c4c4c4"/>
<rect x="843" y="511" width="3.6" height="1" fill="#c4c4c4"/>
<rect x="831" y="513.5" width="3.6" height="1" fill="#c4c4c4"/>
<rect x="843" y="513.5" width="3.6" height="1" fill="#c4c4c4"/>
<rect x="831" y="516" width="3.6" height="1" fill="#c4c4c4"/>
<rect x="843" y="516" width="3.6" height="1" fill="#c4c4c4"/>
<rect x="831" y="518.5" width="3.6" height="1" fill="#c4c4c4"/>
<rect x="843" y="518.5" width="3.6" height="1" fill="#c4c4c4"/>
<rect x="831" y="521" width="3.6" height="1" fill="#c4c4c4"/>
<rect x="843" y="521" width="3.6" height="1" fill="#c4c4c4"/>
<path d="M832.8 505V523 M844.8 505V523" stroke="#cfcfcf" stroke-width=".6"/>
<rect x="834.7" y="526.5" width="12.3" height="6.1" fill="#ededed" stroke="#bdbdbd" stroke-width=".7"/>
<rect x="835.5" y="527.3" width="2.7" height="4.5" fill="#c6c6c6"/>
<rect x="843.5" y="527.3" width="2.7" height="4.5" fill="#c6c6c6"/>
<path d="M838.2 529.5H843.5" stroke="#bbb" stroke-width=".6"/>
<rect x="878" y="513.1" width="10.9" height="14.8" fill="#c2c2c2"/>
<rect x="878" y="517.2" width="10.9" height="2.2" fill="#dedede"/>
<path d="M883.5 519.4V527.9" stroke="#cfcfcf" stroke-width=".5"/>
<circle cx="890.5" cy="528.9" r="0.9" fill="#222"/>
<circle cx="880" cy="537.7" r="2.2" fill="#000"/>
<text x="858.2" y="548" font-family="Liberation Sans, sans-serif" font-weight="700" font-size="5.6" fill="#111" textLength="5.4" lengthAdjust="spacingAndGlyphs">P4</text>
<rect x="864" y="546.8" width="2.6" height="1" fill="#111"/>
<rect x="858.9" y="548.9" width="6.3" height="2.6" fill="#c9c9c9"/>
<rect x="858.9" y="560.5" width="6.3" height="4.7" fill="#c9c9c9"/>
<rect x="859.6" y="553" width="5" height="5.6" fill="#ececec"/>
<rect x="861.6" y="554" width="1" height="3.6" fill="#ccc"/>
<path d="M857.5 552.6V559 M866.6 552.6V559" stroke="#111" stroke-width="1.4"/>
<rect x="820.5" y="544.7" width="6.3" height="3.2" fill="#c9c9c9"/>
<rect x="820.5" y="553.7" width="6.3" height="3.1" fill="#c9c9c9"/>
<rect x="823.2" y="547.9" width="1" height="5.8" fill="#c9c9c9"/>
<rect x="829.2" y="545.4" width="5.5" height="17.7" fill="#c6c6c6"/>
<rect x="844.7" y="545.4" width="5.3" height="17.7" fill="#c6c6c6"/>
<rect x="837.6" y="554" width="4.4" height="0.8" fill="#ccc"/>
<rect x="821" y="565.7" width="5.8" height="11.6" fill="#ededed" stroke="#c2c2c2" stroke-width=".6"/>
<rect x="821" y="565.7" width="5.8" height="2.7" fill="#c6c6c6"/>
<rect x="821" y="574.6" width="5.8" height="2.7" fill="#c6c6c6"/>
<rect x="830.5" y="570" width="12" height="12" fill="#f0f0f0"/>
<rect x="831.4" y="569.8" width="2.2" height="2.4" fill="#c9c9c9"/>
<rect x="831.4" y="580" width="2.2" height="2.4" fill="#c9c9c9"/>
<rect x="835.2" y="569.8" width="2.2" height="2.4" fill="#c9c9c9"/>
<rect x="835.2" y="580" width="2.2" height="2.4" fill="#c9c9c9"/>
<rect x="839" y="569.8" width="2.2" height="2.4" fill="#c9c9c9"/>
<rect x="839" y="580" width="2.2" height="2.4" fill="#c9c9c9"/>
<rect x="832.6" y="573.6" width="7.9" height="4.8" fill="#c6c6c6"/>
<rect x="835" y="575" width="3" height="2" fill="#b0b0b0"/>
<path d="M829.3 569V583H831.5 M841.5 583H843.7V569" fill="none" stroke="#111" stroke-width="1.2"/>
<path d="M829.3 569H843.7" stroke="#111" stroke-width=".8"/>
<rect x="846.1" y="568.4" width="6.5" height="8.9" fill="#c6c6c6"/>
<rect x="858.4" y="568.4" width="6.3" height="8.9" fill="#c6c6c6"/>
<path d="M852.6 572.8H858.4" stroke="#c9c9c9" stroke-width=".7"/>
<rect x="822.4" y="580.5" width="3.4" height="3.5" fill="#a4a4a4"/>
<rect x="822.4" y="585" width="3.4" height="3.5" fill="#a4a4a4"/>
<rect x="829" y="586.5" width="5" height="1.5" fill="#555"/>
<rect x="835.5" y="586.5" width="5" height="1.5" fill="#555"/>
<rect x="846.2" y="580" width="1.6" height="2" fill="#a4a4a4"/>
<rect x="846.2" y="582.6" width="1.6" height="2" fill="#a4a4a4"/>
<rect x="850" y="580" width="4.6" height="1.2" fill="#555"/>
<rect x="853" y="583" width="1.8" height="1.9" fill="#a4a4a4"/>
<rect x="853" y="585.5" width="1.8" height="1.9" fill="#a4a4a4"/>
<rect x="857.3" y="580.5" width="3.7" height="3.1" fill="#a4a4a4"/>
<rect x="862" y="580.5" width="3.7" height="3.1" fill="#a4a4a4"/>
<rect x="857.3" y="585.7" width="3.7" height="3.2" fill="#a4a4a4"/>
<rect x="862" y="585.7" width="3.7" height="3.2" fill="#a4a4a4"/>
<rect x="877.3" y="585.7" width="3.5" height="3.2" fill="#a4a4a4"/>
<rect x="881.7" y="585.7" width="3.5" height="3.2" fill="#a4a4a4"/>
<circle cx="881.8" cy="557.3" r="3" fill="#b4b4b4"/>
<path d="M880.2 557.3H883.4" stroke="#8a8a8a" stroke-width=".8"/>
<rect x="880" y="565.2" width="3.6" height="3.5" fill="#a4a4a4"/>
<rect x="880" y="569.6" width="3.6" height="3.5" fill="#a4a4a4"/>
<rect x="880.5" y="578.4" width="2.6" height="2.1" fill="#a4a4a4"/>
<rect x="880.5" y="581" width="2.6" height="2.1" fill="#a4a4a4"/>
<text x="759.8" y="551" font-family="Liberation Sans, sans-serif" font-weight="700" font-size="8.6" fill="#111" textLength="14.4" lengthAdjust="spacingAndGlyphs">SIM2</text>
<text x="943.8" y="552.1" font-family="Liberation Sans, sans-serif" font-weight="700" font-size="8.6" fill="#111" textLength="13.6" lengthAdjust="spacingAndGlyphs">SIM1</text>
<text x="774.6" y="479.5" font-family="Liberation Sans, sans-serif" font-weight="700" font-size="4.6" fill="#111" textLength="4.4" lengthAdjust="spacingAndGlyphs">P1</text>
<path d="M991.3 548.6H1031.8V621H991.3Z" fill="none" stroke="#cdcdcd" stroke-width=".7"/>
<rect x="991.3" y="547.3" width="8.6" height="7.4" fill="#c2c2c2"/>
<rect x="1021" y="547.3" width="8.2" height="6.9" fill="#c2c2c2"/>
<rect x="991.3" y="616.3" width="8.6" height="5.8" fill="#c2c2c2"/>
<rect x="1021" y="616.3" width="8.2" height="5.8" fill="#c2c2c2"/>
<rect x="1031.8" y="558.4" width="7.3" height="3.1" fill="#c9c9c9"/>
<rect x="1031.8" y="565.7" width="7.3" height="3.2" fill="#c9c9c9"/>
<rect x="1031.8" y="573.1" width="7.3" height="2.9" fill="#c9c9c9"/>
<rect x="1031.8" y="580.2" width="7.3" height="3" fill="#c9c9c9"/>
<rect x="1031.8" y="587.2" width="7.3" height="3.3" fill="#c9c9c9"/>
<rect x="1031.8" y="592.4" width="7.3" height="3.4" fill="#c9c9c9"/>
<rect x="1031.8" y="597.4" width="7.3" height="2.6" fill="#c9c9c9"/>
<rect x="1031.8" y="601.9" width="7.3" height="2.8" fill="#c9c9c9"/>
<rect x="1031.8" y="608.9" width="7.3" height="3.2" fill="#c9c9c9"/>
<rect x="1011" y="583" width="5" height="0.8" fill="#ccc"/>
<text x="1033.8" y="556.6" font-family="Liberation Sans, sans-serif" font-weight="700" font-size="4" fill="#111">o</text>
<circle cx="1045.8" cy="552.1" r="3.1" fill="#b4b4b4"/>
<path d="M1044.2 552.1H1047.4" stroke="#8a8a8a" stroke-width=".8"/>
<circle cx="1046" cy="561" r="3.1" fill="#b4b4b4"/>
<path d="M1044.4 561H1047.6" stroke="#8a8a8a" stroke-width=".8"/>
<circle cx="1046.2" cy="568.9" r="3.1" fill="#b4b4b4"/>
<path d="M1044.6 568.9H1047.8" stroke="#8a8a8a" stroke-width=".8"/>
<circle cx="1053.4" cy="581.5" r="3.1" fill="#b4b4b4"/>
<path d="M1051.8 581.5H1055" stroke="#8a8a8a" stroke-width=".8"/>
<circle cx="1047" cy="587" r="3.1" fill="#b4b4b4"/>
<path d="M1045.4 587H1048.6" stroke="#8a8a8a" stroke-width=".8"/>
<circle cx="1046.8" cy="595.5" r="3.1" fill="#b4b4b4"/>
<path d="M1045.2 595.5H1048.4" stroke="#8a8a8a" stroke-width=".8"/>
<circle cx="1047" cy="603.4" r="3.1" fill="#b4b4b4"/>
<path d="M1045.4 603.4H1048.6" stroke="#8a8a8a" stroke-width=".8"/>
<circle cx="1047.3" cy="611.6" r="3.1" fill="#b4b4b4"/>
<path d="M1045.7 611.6H1048.9" stroke="#8a8a8a" stroke-width=".8"/>
<circle cx="1007.9" cy="628.9" r="3" fill="#b4b4b4"/>
<path d="M1006.3 628.9H1009.5" stroke="#8a8a8a" stroke-width=".8"/>
<circle cx="1016" cy="628.6" r="3" fill="#b4b4b4"/>
<path d="M1014.4 628.6H1017.6" stroke="#8a8a8a" stroke-width=".8"/>
<circle cx="1024.7" cy="628.6" r="3" fill="#b4b4b4"/>
<path d="M1023.1 628.6H1026.3" stroke="#8a8a8a" stroke-width=".8"/>
<circle cx="1032.8" cy="628.9" r="3" fill="#b4b4b4"/>
<path d="M1031.2 628.9H1034.4" stroke="#8a8a8a" stroke-width=".8"/>
<circle cx="1040.9" cy="628.9" r="3" fill="#b4b4b4"/>
<path d="M1039.3 628.9H1042.5" stroke="#8a8a8a" stroke-width=".8"/>
<circle cx="999.9" cy="627" r="3" fill="#cfcfcf"/>
<circle cx="1049.1" cy="627" r="3" fill="#cfcfcf"/>
<rect x="990.2" y="629.4" width="7.2" height="14.3" rx="3.6" fill="#c6c6c6"/>
<rect x="991.8" y="631" width="4" height="11.1" rx="2" fill="#d8d8d8" stroke="#2e2e2e" stroke-width="1.2"/>
<rect x="1052" y="629.4" width="6.9" height="14.3" rx="3.5" fill="#c6c6c6"/>
<rect x="1053.6" y="631" width="3.7" height="11.1" rx="1.9" fill="#d8d8d8" stroke="#2e2e2e" stroke-width="1.2"/>
<circle cx="1067.3" cy="544.5" r="10.1" fill="#fff" stroke="#111" stroke-width="1.3"/>
<path d="M1057.2 544.5H1077.4" stroke="#111" stroke-width="1.3"/>
<rect x="1068" y="542.8" width="4" height="0.7" fill="#ccc"/>
<rect x="992" y="528.9" width="5.6" height="11.6" fill="#ededed" stroke="#bdbdbd" stroke-width=".6"/>
<rect x="992" y="528.9" width="5.6" height="2.7" fill="#c6c6c6"/>
<rect x="992" y="537.8" width="5.6" height="2.7" fill="#c6c6c6"/>
<rect x="999.9" y="532.1" width="3.5" height="3.7" fill="#a4a4a4"/>
<rect x="999.9" y="536.8" width="3.5" height="3.7" fill="#a4a4a4"/>
<rect x="1007.1" y="528.4" width="3.6" height="3.7" fill="#a4a4a4"/>
<rect x="1007.1" y="533.1" width="3.6" height="3.7" fill="#a4a4a4"/>
<rect x="1012.3" y="532.4" width="3.4" height="3.6" fill="#a4a4a4"/>
<rect x="1012.3" y="536.9" width="3.4" height="3.6" fill="#a4a4a4"/>
<rect x="1017.8" y="532.1" width="3.5" height="3.7" fill="#a4a4a4"/>
<rect x="1017.8" y="536.8" width="3.5" height="3.7" fill="#a4a4a4"/>
<rect x="1023.1" y="532.1" width="3.7" height="3.7" fill="#a4a4a4"/>
<rect x="1023.1" y="536.8" width="3.7" height="3.7" fill="#a4a4a4"/>
<rect x="1029.4" y="525.8" width="3.1" height="3.7" fill="#a4a4a4"/>
<rect x="1029.4" y="530.5" width="3.1" height="3.7" fill="#a4a4a4"/>
<rect x="1035.3" y="514.7" width="3.5" height="3.5" fill="#a4a4a4"/>
<rect x="1035.3" y="519.1" width="3.5" height="3.5" fill="#a4a4a4"/>
<rect x="1035.3" y="525.8" width="3.5" height="3.7" fill="#a4a4a4"/>
<rect x="1035.3" y="530.5" width="3.5" height="3.7" fill="#a4a4a4"/>
<rect x="1042.3" y="521.9" width="3.7" height="3.8" fill="#a4a4a4"/>
<rect x="1042.3" y="526.7" width="3.7" height="3.8" fill="#a4a4a4"/>
<rect x="1048.6" y="526.1" width="3.5" height="3.7" fill="#a4a4a4"/>
<rect x="1048.6" y="530.8" width="3.5" height="3.7" fill="#a4a4a4"/>
<rect x="1054.2" y="526.1" width="3.4" height="3.7" fill="#a4a4a4"/>
<rect x="1054.2" y="530.8" width="3.4" height="3.7" fill="#a4a4a4"/>
<rect x="1061" y="524.2" width="3.4" height="3.7" fill="#a4a4a4"/>
<rect x="1061" y="528.9" width="3.4" height="3.7" fill="#a4a4a4"/>
<rect x="1066.5" y="524.2" width="3.5" height="3.7" fill="#a4a4a4"/>
<rect x="1066.5" y="528.9" width="3.5" height="3.7" fill="#a4a4a4"/>
<rect x="1018.1" y="526.3" width="4" height="3.4" fill="#a4a4a4"/>
<rect x="1023.1" y="526.3" width="4" height="3.4" fill="#a4a4a4"/>
<rect x="1005.5" y="538.9" width="5.2" height="1.7" fill="#888"/>
<rect x="1040.8" y="532.8" width="5.6" height="1.6" fill="#888"/>
<path d="M704.4 366.5 H748.3 Q750.3 366.5 750.3 368.5 V431.5 Q750.3 434.5 753.3 434.5 H790.8 Q793.8 434.5 793.8 431.5 V368 Q793.8 366.5 795.3 366.5 H800.5 Q802.5 366.6 803.2 367.8 Q804 368.7 805.5 368.7 H840.6 C842.6 368.7 843 366 843.4 364 C843.8 361.6 845 361 846 361 C847.2 361 848.2 362 848.6 364 C849 367.5 851 370 853.7 370 C856.4 370 858.6 367.5 859 364 C859.4 362 860.4 361 861.6 361 C862.8 361 864 362 864.6 364 C865 365.8 865.6 366.6 867.5 366.6 H934.5 Q937.3 366.6 937.3 369.5 V373.4 A5 5 0 0 0 947.3 373.4 V362.5 Q947.3 358.4 951.5 358.4 H965.4 Q966.9 358.4 966.9 360 V388.5 Q966.9 391.3 969 391 Q970 389.4 971.5 389.4 H1013.5 Q1015 389.4 1015.8 391 Q1017.9 391.3 1017.9 388.5 V360 Q1017.9 358.4 1019.4 358.4 H1028 C1032 358.4 1033.5 361.5 1035 363.8 C1036.2 365.6 1037.5 366.5 1040 366.5 H1060.5 Q1067.6 366.5 1067.6 373.5 V392 A11.4 11.4 0 0 0 1079 403.4 H1092 Q1097 403.4 1097 408.4 V645.3 Q1097 651.3 1091 651.3 H1051.8 V642.2 L1047.6 635.4 H1002.3 L997.6 642.6 V651.3 H682.3 Q676.3 651.3 676.3 645.3 V637 Q676.3 633.5 673.2 630.8 Q670 628 670 624.5 V559.3 Q670 553.2 676 553.2 H684 C690 553.2 695 552.3 702 549.4 L722 540 C729 536.5 735.5 530.5 735.5 520 V489 A30.3 21.9 0 0 0 705.2 467.1 H676 Q670.2 467.1 670.2 461.3 V409.4 Q670.2 403.4 676.2 403.4 H688 A11.4 11.4 0 0 0 699.4 392 V371.5 Q699.4 366.5 704.4 366.5 Z" fill="none" stroke="#2e2e2e" stroke-width="1" stroke-linejoin="round"/>
<path d="M852 417.3 H933 Q936.5 417.3 936.5 420.5 V446 Q936.5 450 932.5 450 H919 Q913.4 450 913.4 455.5 V475 Q913.4 477.5 911 477.5 H852.5 L847.5 472 V421.5 Z" fill="none" stroke="#2e2e2e" stroke-width="1" stroke-linejoin="round"/>
<text x="651" y="829.3" font-family="Liberation Sans, sans-serif" font-size="11" fill="#333" textLength="271" lengthAdjust="spacingAndGlyphs">98737_1_12M12_201701161 - Thu Feb 23 19:42:12 2017</text>
</svg>
<!--PCB-END-->
  </div>
</div>
<div id="vsb" class="abs"></div>
<div class="abs" style="left:1505px;top:499px;width:15px;height:320px;background:#dcdcdc;border-top:1px solid #a6a6a6;border-bottom:1px solid #a6a6a6"></div>
<div class="abs" style="left:1510px;top:656px;width:7px;height:1px;background:#555;box-shadow:0 3px 0 #555,0 6px 0 #555"></div>
<svg class="abs" style="left:1505px;top:161px" width="15" height="17" viewBox="0 0 15 17"><path d="M4 10.5 L7.500 7 L11 10.5" fill="none" stroke="#505050" stroke-width="1.300"/></svg>
<svg class="abs" style="left:1505px;top:819px" width="15" height="15" viewBox="0 0 15 15"><path d="M4.500 7 L8 10.500 L11.500 7" fill="none" stroke="#505050" stroke-width="1.300"/></svg>

<div id="under" class="abs"></div>
<!-- STATUS -->
<div id="status" class="abs">
  <div class="abs mono" style="left:0;top:6px;line-height:16px;color:#0a1230">Version:1.0.0.52</div>
  <div class="abs mono" style="right:1px;top:6px;line-height:16px;color:#fff">Current [XT1750_X71754_XT1758_3G_Component_Location]</div>
</div>
<div id="bottom" class="abs"></div>
</body>
</html>
